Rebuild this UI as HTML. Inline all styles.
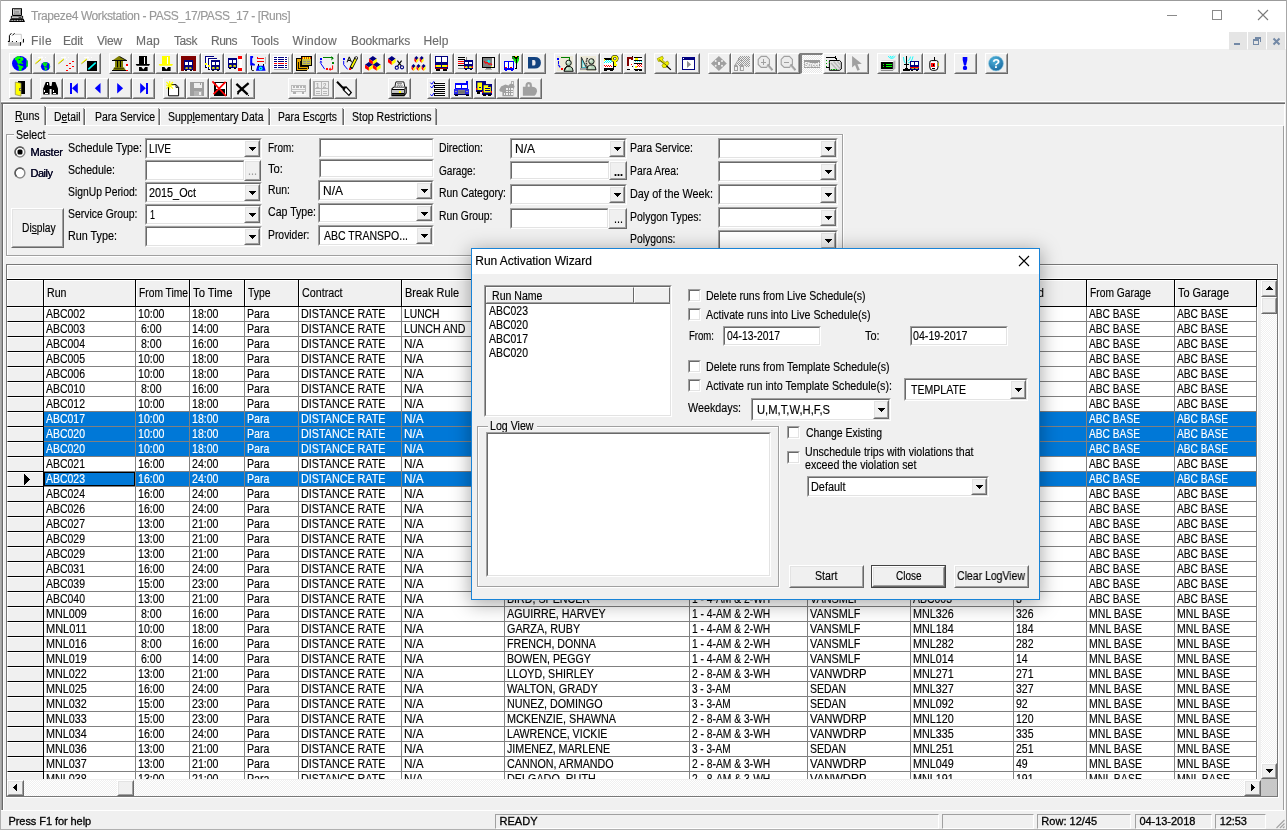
<!DOCTYPE html>
<html><head><meta charset="utf-8"><title>Trapeze4 Workstation - PASS_17/PASS_17 - [Runs]</title>
<style>
html,body{margin:0;padding:0}
body{width:1287px;height:830px;overflow:hidden;position:relative;background:#f0f0f0;font-family:"Liberation Sans",sans-serif;font-size:11px;line-height:14px;color:#000}
div,span,svg{position:absolute;box-sizing:border-box}
.t{white-space:pre;display:block;transform-origin:0 0;-webkit-text-stroke:0.15px}
.so{border:1px solid;border-color:#a0a0a0 #fff #fff #a0a0a0}
.si{left:0;top:0;right:0;bottom:0;border:1px solid;border-color:#696969 #e3e3e3 #e3e3e3 #696969;background:#fff}
.ro{border:1px solid;border-color:#fff #696969 #696969 #fff;background:#f0f0f0}
.ri{left:0;top:0;right:0;bottom:0;border:1px solid;border-color:#e3e3e3 #a0a0a0 #a0a0a0 #e3e3e3}
.tb{border:1px solid;border-color:#fff #696969 #696969 #fff;background:#f0f0f0}
.tb .ri{border-color:#f0f0f0 #a0a0a0 #a0a0a0 #f0f0f0}
.g{font-size:12px;line-height:15px;transform:scaleX(0.88)}
.tp{border:solid;border-width:2px 1px 1px 2px;border-color:#808080 #fff #fff #808080;background:repeating-conic-gradient(#fff 0% 25%,#e6e6e6 0% 50%) 0 0/2px 2px}
</style></head><body>
<div style="left:0;top:0;width:1287px;height:830px;will-change:transform">
<div style="left:0px;top:0px;width:1287px;height:49px;background:#fff"></div>
<div style="left:0px;top:0px;width:1287px;height:1px;background:#9b9b9b"></div>
<div style="left:0px;top:0px;width:1px;height:830px;background:#b0b0b0"></div>
<div style="left:1286px;top:0px;width:1px;height:830px;background:#a8a8a8"></div>
<div style="left:0px;top:829px;width:1287px;height:1px;background:#b0b0b0"></div>
<svg style="left:8px;top:7px" width="18" height="16" viewBox="8 7 18 16">
<rect x="12" y="7.9" width="10" height="8" rx="1" fill="#000"/><rect x="13" y="8.8" width="8" height="5.9" fill="#fff"/><rect x="14" y="9.5" width="6.6" height="4.5" fill="#c8c8c8" stroke="#444" stroke-width="0.5"/><rect x="15.2" y="10.9" width="3.8" height="1.9" fill="#9a9a9a"/>
<rect x="10.9" y="15.9" width="12.2" height="2.8" fill="#000"/><rect x="11.8" y="16.5" width="10.4" height="1.4" fill="#fff"/><rect x="12.3" y="16.6" width="5.3" height="1.1" fill="#b0b0b0"/><rect x="18.5" y="17.2" width="3" height="0.7" fill="#000"/>
<polygon points="10.4,18.7 23.6,18.7 25,22 9,22" fill="#000"/><path d="M10.6 20.4H23.4" stroke="#fff" stroke-width="0.9" stroke-dasharray="1 0.6"/>
</svg>
<span class="t" style="left:31px;top:9px;font-size:12px;line-height:15px;color:#999;letter-spacing:-0.41px;">Trapeze4 Workstation - PASS_17/PASS_17 - [Runs]</span>
<div style="left:1167px;top:15px;width:10px;height:1px;background:#8a8a8a"></div>
<div style="left:1212px;top:10px;width:10px;height:10px;border:1px solid #8a8a8a"></div>
<svg style="left:1257px;top:9px" width="12" height="12"><path d="M1 1L11 11M11 1L1 11" stroke="#7a7a7a" stroke-width="1.1" fill="none"/></svg>
<svg style="left:7px;top:32px" width="18" height="15" viewBox="7 32 18 15">
<path d="M14.5 34.3H21.3V39.5" stroke="#c4c4c4" stroke-width="0.9" fill="none"/>
<path d="M9.4 41.2V35.6L11.4 33.2M12.4 35.4L14.6 33.2" stroke="#000" stroke-width="1" fill="none"/>
<rect x="7.9" y="40.9" width="1.9" height="1.1" fill="#000"/><rect x="11.9" y="41" width="1" height="1" fill="#000"/><rect x="16" y="41" width="1" height="1" fill="#000"/>
<rect x="8.2" y="42.2" width="11.8" height="3.7" fill="#c2c2c2"/>
<polygon points="20.9,42 23,39 23,42.4 20.9,45.4" fill="#dcdcdc"/>
<rect x="20" y="42" width="0.95" height="3.7" fill="#000"/><rect x="23" y="38.9" width="0.95" height="3.6" fill="#000"/>
</svg>
<span class="t" style="left:31px;top:34px;font-size:12px;line-height:15px;color:#6d6d6d;letter-spacing:0.41px;">File</span>
<span class="t" style="left:63px;top:34px;font-size:12px;line-height:15px;color:#6d6d6d;letter-spacing:-0.17px;">Edit</span>
<span class="t" style="left:97px;top:34px;font-size:12px;line-height:15px;color:#6d6d6d;letter-spacing:-0.20px;">View</span>
<span class="t" style="left:136px;top:34px;font-size:12px;line-height:15px;color:#6d6d6d;letter-spacing:0.22px;">Map</span>
<span class="t" style="left:174px;top:34px;font-size:12px;line-height:15px;color:#6d6d6d;letter-spacing:-0.42px;">Task</span>
<span class="t" style="left:211px;top:34px;font-size:12px;line-height:15px;color:#6d6d6d;letter-spacing:-0.50px;">Runs</span>
<span class="t" style="left:251px;top:34px;font-size:12px;line-height:15px;color:#6d6d6d;letter-spacing:-0.00px;">Tools</span>
<span class="t" style="left:292.5px;top:34px;font-size:12px;line-height:15px;color:#6d6d6d;letter-spacing:0.30px;">Window</span>
<span class="t" style="left:351px;top:34px;font-size:12px;line-height:15px;color:#6d6d6d;letter-spacing:-0.11px;">Bookmarks</span>
<span class="t" style="left:423.5px;top:34px;font-size:12px;line-height:15px;color:#6d6d6d;letter-spacing:0.08px;">Help</span>
<div style="left:1229px;top:32px;width:18px;height:18px;background:#e5e5e5"></div>
<div style="left:1248px;top:32px;width:18px;height:18px;background:#e5e5e5"></div>
<div style="left:1267px;top:32px;width:18px;height:18px;background:#e5e5e5"></div>
<div style="left:1234px;top:43px;width:6px;height:2px;background:#7389a6"></div>
<div style="left:1253px;top:39px;width:6px;height:6px;border:1px solid #7389a6;border-top-width:2px"></div>
<div style="left:1255px;top:37px;width:6px;height:5px;border:1px solid #7389a6;border-top-width:2px;border-left:0;border-bottom:0"></div>
<div style="left:1255px;top:37px;width:1px;height:2px;background:#7389a6"></div>
<svg style="left:1272px;top:37px" width="9" height="9"><path d="M1.5 1.5L7.5 7.5M7.5 1.5L1.5 7.5" stroke="#7389a6" stroke-width="2" fill="none"/></svg>
<div class="tb" style="left:9px;top:53px;width:23px;height:21px"><div class="ri"></div></div>
<svg style="left:12px;top:56px;overflow:visible" width="16" height="15" viewBox="0 0 16 15" shape-rendering="crispEdges"><ellipse cx="8" cy="7.5" rx="8" ry="7.6" fill="#0000ff" shape-rendering="auto"/><polygon points="2.60,2.50 5.50,0.30 8.00,0.20 8.20,1.60 10.00,1.00 11.50,2.40 11.00,4.40 9.60,5.00 9.60,6.40 11.00,6.90 11.00,8.00 8.50,7.60 6.50,8.00 5.00,6.60 4.40,4.60 3.00,4.00" fill="#00ff00" shape-rendering="auto"/><polygon points="5.40,8.40 7.00,8.60 8.00,9.50 11.00,10.00 11.40,11.60 10.00,12.20 9.50,14.60 7.60,15.00 6.50,13.00 6.80,11.00 5.50,9.60" fill="#00ff00" shape-rendering="auto"/><polygon points="14.40,3.00 15.70,5.00 16.00,10.00 14.80,11.60 14.20,9.00 14.50,6.00" fill="#00ff00" shape-rendering="auto"/><polygon points="6.40,3.20 8.40,2.80 8.20,4.00 6.80,4.20" fill="#0000ff" shape-rendering="auto"/></svg>
<div class="tb" style="left:32px;top:53px;width:23px;height:21px"><div class="ri"></div></div>
<svg style="left:35px;top:56px;overflow:visible" width="16" height="15" viewBox="0 0 16 15" shape-rendering="crispEdges"><path d="M0.5 7.7L5.8 3.5" stroke="#8a8000" stroke-width="0.9" fill="none" shape-rendering="auto"/><path d="M0.4 7.1L5.7 2.9" stroke="#ffff00" stroke-width="1" fill="none" shape-rendering="auto"/><path d="M3 1.5H8M6.5 0.5L8 1.5L6.5 2.5" stroke="#fff" stroke-width="0.9" fill="none" shape-rendering="auto"/><rect x="10" y="1" width="1" height="1" fill="#fff"/><rect x="8" y="3" width="1" height="1" fill="#fff"/><ellipse cx="10.5" cy="10.3" rx="4.6" ry="4.369999999999999" fill="#0000ff" shape-rendering="auto"/><polygon points="7.39,7.43 9.06,6.16 10.50,6.10 10.62,6.91 11.65,6.56 12.51,7.37 12.22,8.52 11.42,8.86 11.42,9.67 12.22,9.96 12.22,10.59 10.79,10.36 9.64,10.59 8.78,9.78 8.43,8.63 7.62,8.29" fill="#00ff00" shape-rendering="auto"/><polygon points="9.01,10.82 9.93,10.93 10.50,11.45 12.22,11.74 12.46,12.66 11.65,13.00 11.36,14.38 10.27,14.61 9.64,13.46 9.81,12.31 9.06,11.51" fill="#00ff00" shape-rendering="auto"/><polygon points="14.18,7.71 14.93,8.86 15.10,11.74 14.41,12.66 14.06,11.16 14.24,9.44" fill="#00ff00" shape-rendering="auto"/><polygon points="9.58,7.83 10.73,7.60 10.62,8.29 9.81,8.40" fill="#0000ff" shape-rendering="auto"/></svg>
<div class="tb" style="left:55px;top:53px;width:23px;height:21px"><div class="ri"></div></div>
<svg style="left:58px;top:56px;overflow:visible" width="16" height="15" viewBox="0 0 16 15" shape-rendering="crispEdges"><path d="M0.5 7.7L5.8 3.5" stroke="#8a8000" stroke-width="0.9" fill="none" shape-rendering="auto"/><path d="M0.4 7.1L5.7 2.9" stroke="#ffff00" stroke-width="1" fill="none" shape-rendering="auto"/><path d="M3 1.5H8M6.5 0.5L8 1.5L6.5 2.5" stroke="#fff" stroke-width="0.9" fill="none" shape-rendering="auto"/><rect x="10" y="1" width="1" height="1" fill="#fff"/><rect x="8" y="3" width="1" height="1" fill="#fff"/><rect x="13.7" y="4.7" width="2.6" height="1.6" fill="#ffe8e8"/><rect x="14" y="5" width="2" height="1" fill="#ff0000"/><rect x="10.7" y="6.7" width="2.6" height="1.6" fill="#ffe8e8"/><rect x="11" y="7" width="2" height="1" fill="#ff0000"/><rect x="7.7" y="8.7" width="2.6" height="1.6" fill="#ffe8e8"/><rect x="8" y="9" width="2" height="1" fill="#ff0000"/><rect x="13.7" y="9.7" width="2.6" height="1.6" fill="#ffe8e8"/><rect x="14" y="10" width="2" height="1" fill="#ff0000"/><rect x="10.7" y="11.7" width="2.6" height="1.6" fill="#ffe8e8"/><rect x="11" y="12" width="2" height="1" fill="#ff0000"/><rect x="7.7" y="13.7" width="2.6" height="1.6" fill="#ffe8e8"/><rect x="8" y="14" width="2" height="1" fill="#ff0000"/></svg>
<div class="tb" style="left:78px;top:53px;width:23px;height:21px"><div class="ri"></div></div>
<svg style="left:81px;top:56px;overflow:visible" width="16" height="15" viewBox="0 0 16 15" shape-rendering="crispEdges"><path d="M0.5 7.7L5.8 3.5" stroke="#8a8000" stroke-width="0.9" fill="none" shape-rendering="auto"/><path d="M0.4 7.1L5.7 2.9" stroke="#ffff00" stroke-width="1" fill="none" shape-rendering="auto"/><path d="M3 1.5H8M6.5 0.5L8 1.5L6.5 2.5" stroke="#fff" stroke-width="0.9" fill="none" shape-rendering="auto"/><rect x="10" y="1" width="1" height="1" fill="#fff"/><rect x="8" y="3" width="1" height="1" fill="#fff"/><rect x="6" y="5" width="10" height="10" fill="#000"/><path d="M7.3 13.4L14.7 6.6" stroke="#00ffff" stroke-width="1.5" fill="none" shape-rendering="auto"/></svg>
<div class="tb" style="left:109px;top:53px;width:23px;height:21px"><div class="ri"></div></div>
<svg style="left:112px;top:56px;overflow:visible" width="16" height="15" viewBox="0 0 16 15" shape-rendering="crispEdges"><polygon points="6.9,0 14.8,4.8 0,4.8" fill="#808000" shape-rendering="auto"/><path d="M7.5 0.5L14.8 4.6" stroke="#000" stroke-width="0.9" fill="none" shape-rendering="auto"/><rect x="0" y="4" width="15" height="1" fill="#000"/><rect x="3" y="5" width="8" height="6.5" fill="#000"/><rect x="3" y="5" width="1.6" height="6.5" fill="#808000"/><rect x="6" y="5" width="1.6" height="6.5" fill="#808000"/><rect x="9" y="5" width="1.6" height="6.5" fill="#808000"/><polygon points="2,11.2 12,11.2 13.5,14 1,14" fill="#808000" shape-rendering="auto"/><rect x="0" y="14" width="14.5" height="1" fill="#000"/><path d="M2 13.2l1 -1l1 1l1 -1l1 1l1 -1l1 1l1 -1l1 1l1 -1l1 1" stroke="#000" stroke-width="0.6" fill="none" shape-rendering="auto"/><rect x="14" y="8.4" width="2" height="1.6" fill="#ff0000"/><rect x="14" y="10" width="2" height="4" fill="#fff"/><rect x="14" y="14" width="2" height="1" fill="#ff0000"/></svg>
<div class="tb" style="left:132px;top:53px;width:23px;height:21px"><div class="ri"></div></div>
<svg style="left:135px;top:56px;overflow:visible" width="16" height="15" viewBox="0 0 16 15" shape-rendering="crispEdges"><rect x="4" y="0" width="8" height="8" fill="#000"/><rect x="9" y="1" width="1" height="7" fill="#fff"/><polygon points="0.7,8 15,8 14,9.8 1.7,9.8" fill="#000" shape-rendering="auto"/><rect x="4" y="10" width="9" height="1" fill="#f8f8f8"/><polygon points="4,11 6.4,11 8.3,13.4 10.2,11 12.6,11 12.6,15 4,15" fill="#000" shape-rendering="auto"/></svg>
<div class="tb" style="left:155px;top:53px;width:23px;height:21px"><div class="ri"></div></div>
<svg style="left:158px;top:56px;overflow:visible" width="16" height="15" viewBox="0 0 16 15" shape-rendering="crispEdges"><rect x="4" y="0" width="8" height="8" fill="#ffff00"/><rect x="9" y="1" width="1" height="7" fill="#fff"/><polygon points="0.7,8 15,8 14,9.8 1.7,9.8" fill="#ffff00" shape-rendering="auto"/><rect x="4" y="10" width="9" height="1" fill="#f8f8f8"/><polygon points="4,11 6.4,11 8.3,13.4 10.2,11 12.6,11 12.6,15 4,15" fill="#000" shape-rendering="auto"/></svg>
<div class="tb" style="left:178px;top:53px;width:23px;height:21px"><div class="ri"></div></div>
<svg style="left:181px;top:56px;overflow:visible" width="16" height="15" viewBox="0 0 16 15" shape-rendering="crispEdges"><rect x="0" y="0" width="15" height="15" fill="#800000"/><rect x="2.6" y="3.7" width="9.8" height="11.3" fill="#fff"/><rect x="3.4" y="4.4" width="8.2" height="9.6" fill="#000080"/><rect x="4.4" y="6.128" width="2.5999999999999996" height="2.88" fill="#fff"/><rect x="8.0" y="6.128" width="2.5999999999999996" height="2.88" fill="#fff"/><polygon points="4.4,11.628 6.35,10.928 7.0,12.828000000000001 4.4,12.828000000000001" fill="#ffff00" shape-rendering="auto"/><polygon points="10.6,11.628 8.65,10.928 8.0,12.828000000000001 10.6,12.828000000000001" fill="#ffff00" shape-rendering="auto"/><rect x="4.2" y="14.0" width="2" height="1" fill="#000"/><rect x="8.8" y="14.0" width="2" height="1" fill="#000"/></svg>
<div class="tb" style="left:201px;top:53px;width:23px;height:21px"><div class="ri"></div></div>
<svg style="left:204px;top:56px;overflow:visible" width="16" height="15" viewBox="0 0 16 15" shape-rendering="crispEdges"><rect x="1" y="0" width="9" height="11" fill="#000080"/><rect x="2" y="1" width="8" height="10" fill="#fff"/><rect x="1" y="6.5" width="1.6" height="2" fill="#ffff00"/><rect x="1" y="11" width="1.6" height="1.2" fill="#000"/><rect x="4" y="2" width="9" height="12.4" fill="#000080"/><rect x="5" y="3" width="8" height="10.6" fill="#fff"/><rect x="4" y="8.5" width="1.6" height="2" fill="#ffff00"/><rect x="4.4" y="13.4" width="1.6" height="1" fill="#000"/><rect x="7" y="4" width="8.9" height="10" fill="#000080"/><rect x="8" y="5.8" width="2.95" height="3.0" fill="#fff"/><rect x="11.95" y="5.8" width="2.95" height="3.0" fill="#fff"/><polygon points="8,11.5 10.2125,10.8 10.95,12.700000000000001 8,12.700000000000001" fill="#ffff00" shape-rendering="auto"/><polygon points="14.9,11.5 12.6875,10.8 11.95,12.700000000000001 14.9,12.700000000000001" fill="#ffff00" shape-rendering="auto"/><rect x="7.8" y="14" width="2" height="1" fill="#000"/><rect x="13.100000000000001" y="14" width="2" height="1" fill="#000"/></svg>
<div class="tb" style="left:224px;top:53px;width:23px;height:21px"><div class="ri"></div></div>
<svg style="left:227px;top:56px;overflow:visible" width="16" height="15" viewBox="0 0 16 15" shape-rendering="crispEdges"><rect x="1" y="2" width="9" height="10" fill="#000080"/><rect x="2" y="3.8" width="3.0" height="3.0" fill="#fff"/><rect x="6.0" y="3.8" width="3.0" height="3.0" fill="#fff"/><polygon points="2,9.5 4.25,8.8 5.0,10.700000000000001 2,10.700000000000001" fill="#ffff00" shape-rendering="auto"/><polygon points="9,9.5 6.75,8.8 6.0,10.700000000000001 9,10.700000000000001" fill="#ffff00" shape-rendering="auto"/><rect x="1.8" y="12" width="2" height="1" fill="#000"/><rect x="7.2" y="12" width="2" height="1" fill="#000"/><rect x="11" y="0" width="4" height="2.9" fill="#ff0000"/><rect x="11" y="12" width="4" height="2.9" fill="#ff0000"/><rect x="12.1" y="2.9" width="2.9" height="9.1" fill="#fff"/></svg>
<div class="tb" style="left:247px;top:53px;width:23px;height:21px"><div class="ri"></div></div>
<svg style="left:250px;top:56px;overflow:visible" width="16" height="15" viewBox="0 0 16 15" shape-rendering="crispEdges"><polygon points="0.2,0 3.1,0 3.1,1.6 2.2,2.4 2.2,6.8 4.9,8 4.9,9.4 0.2,9.4" fill="#0000ff" shape-rendering="auto"/><path d="M1.5 9.4V13.8Q1.6 14.6 3.8 14.6" stroke="#000" stroke-width="1" fill="none" shape-rendering="auto"/><rect x="7" y="1.9" width="6.8" height="1.1" fill="#ff0000"/><rect x="7" y="4.8" width="6.8" height="1.1" fill="#ff0000"/><rect x="7" y="0.8" width="1.1" height="1.1" fill="#ff0000"/><rect x="14.8" y="1" width="0.8" height="7" fill="#b8b8b8"/><rect x="8" y="8" width="0.9" height="2" fill="#000"/><rect x="13" y="8" width="0.9" height="2" fill="#000"/><polygon points="7.4,9.8 14.2,9.8 15.6,14.8 5.9,14.8" fill="#0000ff" shape-rendering="auto"/><circle cx="10.7" cy="12.5" r="1.9" fill="#00ffff" shape-rendering="auto"/><circle cx="10.7" cy="12.5" r="0.8" fill="#006080" shape-rendering="auto"/></svg>
<div class="tb" style="left:270px;top:53px;width:23px;height:21px"><div class="ri"></div></div>
<svg style="left:273px;top:56px;overflow:visible" width="16" height="15" viewBox="0 0 16 15" shape-rendering="crispEdges"><rect x="1" y="1" width="15.2" height="13.4" fill="#b0b0b0"/><rect x="0" y="0" width="15.2" height="13.4" fill="#fff"/><rect x="1" y="1" width="2.6" height="1" fill="#000080"/><rect x="5" y="1" width="5.8" height="1" fill="#000080"/><rect x="12.2" y="1" width="1.8" height="1" fill="#000080"/><rect x="1" y="3" width="2.6" height="1" fill="#000080"/><rect x="5" y="3" width="5.8" height="1" fill="#000080"/><rect x="12.2" y="3" width="1.8" height="1" fill="#000080"/><rect x="1" y="5" width="2.6" height="1" fill="#000080"/><rect x="5" y="5" width="5.8" height="1" fill="#000080"/><rect x="12.2" y="5" width="1.8" height="1" fill="#000080"/><rect x="1" y="7" width="2.6" height="1" fill="#ff0000"/><rect x="5" y="7" width="5.8" height="1" fill="#ff0000"/><rect x="12.2" y="7" width="1.8" height="1" fill="#ff0000"/><rect x="1" y="9" width="2.6" height="1" fill="#000080"/><rect x="5" y="9" width="5.8" height="1" fill="#000080"/><rect x="12.2" y="9" width="1.8" height="1" fill="#000080"/><rect x="1" y="11" width="2.6" height="1" fill="#000080"/><rect x="5" y="11" width="5.8" height="1" fill="#000080"/><rect x="12.2" y="11" width="1.8" height="1" fill="#000080"/></svg>
<div class="tb" style="left:293px;top:53px;width:23px;height:21px"><div class="ri"></div></div>
<svg style="left:296px;top:56px;overflow:visible" width="16" height="15" viewBox="0 0 16 15" shape-rendering="crispEdges"><rect x="0" y="2.3" width="13.4" height="12.7" fill="#000"/><rect x="1" y="3.3" width="11.4" height="10.7" fill="#e8a800"/><path d="M2.5 6V12.5H11M4.5 4.5V10.5H13" stroke="#000" stroke-width="0.9" fill="none" /><rect x="5" y="0" width="10.8" height="10" fill="#000"/><rect x="6" y="1" width="8.8" height="8" fill="#c8c040"/><rect x="6" y="1" width="8.8" height="2" fill="#e04000"/><rect x="7" y="1.2" width="0.9" height="2" fill="#ffff00"/><rect x="8.6" y="1.2" width="0.9" height="2" fill="#ffff00"/><rect x="11" y="1.2" width="0.9" height="2" fill="#ffff00"/><rect x="12.6" y="1.2" width="0.9" height="2" fill="#ffff00"/><rect x="7" y="5" width="3" height="1" fill="#909090"/><rect x="11" y="5" width="3" height="1" fill="#909090"/><rect x="7" y="7" width="3" height="1" fill="#909090"/><rect x="11" y="7" width="3" height="1" fill="#909090"/><polygon points="11,15 13.4,12.6 13.4,15" fill="#f0f0f0" /></svg>
<div class="tb" style="left:316px;top:53px;width:23px;height:21px"><div class="ri"></div></div>
<svg style="left:319px;top:56px;overflow:visible" width="16" height="15" viewBox="0 0 16 15" shape-rendering="crispEdges"><rect x="1" y="2" width="2" height="1.8" fill="#0000ff"/><rect x="4.3" y="0.9" width="9.3" height="0.9" fill="#008000"/><polygon points="12,0 14.8,2.2 12.2,4.4 12.6,2.2" fill="#008000" shape-rendering="auto"/><rect x="13.2" y="6.2" width="1.8" height="1.8" fill="#008000"/><polygon points="1.9,4.6 3.4,6.6 0.4,6.6" fill="#0000ff" shape-rendering="auto"/><path d="M1.9 6.6V7.6L5.7 13.2" stroke="#0000ff" stroke-width="1" fill="none" shape-rendering="auto"/><rect x="7" y="12.1" width="1.8" height="1.8" fill="#ff0000"/><path d="M13.6 9.4V13.3H10.5" stroke="#ff0000" stroke-width="1" fill="none" shape-rendering="auto"/><polygon points="11.6,11.6 9.6,13.3 11.6,15" fill="#ff0000" shape-rendering="auto"/></svg>
<div class="tb" style="left:339px;top:53px;width:23px;height:21px"><div class="ri"></div></div>
<svg style="left:342px;top:56px;overflow:visible" width="16" height="15" viewBox="0 0 16 15" shape-rendering="crispEdges"><rect x="1" y="2" width="2" height="1.8" fill="#0000ff"/><path d="M1.7 4.8V8.7L5.6 13.4" stroke="#0000ff" stroke-width="1" fill="none" shape-rendering="auto"/><text x="4.8" y="5.6" font-size="7.5" font-family="Liberation Sans,sans-serif" fill="#000" stroke="#000" stroke-width="0.3">A</text><path d="M14.4 1.6L9 12.2" stroke="#000" stroke-width="3.4" fill="none" shape-rendering="auto"/><path d="M14 2.6L9.6 11.2" stroke="#ffff00" stroke-width="1.7" fill="none" shape-rendering="auto"/><circle cx="14.3" cy="1.9" r="1.3" fill="#fff" stroke="#000" stroke-width="0.8" shape-rendering="auto"/><polygon points="7.9,11.3 10.3,12.6 8.2,14" fill="#000" shape-rendering="auto"/><rect x="7" y="12.4" width="1.8" height="1.4" fill="#ff0000"/></svg>
<div class="tb" style="left:362px;top:53px;width:23px;height:21px"><div class="ri"></div></div>
<svg style="left:365px;top:56px;overflow:visible" width="16" height="15" viewBox="0 0 16 15" shape-rendering="crispEdges"><polygon points="7.9,0 11.8,2.64 7.9,5.28 4,2.64" fill="#000080" shape-rendering="auto"/><polygon points="4,2.64 7.9,5.28 7.9,8.8 4,6.16" fill="#ff0000" shape-rendering="auto"/><polygon points="11.8,2.64 7.9,5.28 7.9,8.8 11.8,6.16" fill="#ffff00" shape-rendering="auto"/><polygon points="3.9,6 7.8,8.64 3.9,11.280000000000001 0,8.64" fill="#000080" shape-rendering="auto"/><polygon points="0,8.64 3.9,11.280000000000001 3.9,14.8 0,12.16" fill="#ff0000" shape-rendering="auto"/><polygon points="7.8,8.64 3.9,11.280000000000001 3.9,14.8 7.8,12.16" fill="#ffff00" shape-rendering="auto"/><polygon points="11.8,6 15.7,8.64 11.8,11.280000000000001 7.9,8.64" fill="#000080" shape-rendering="auto"/><polygon points="7.9,8.64 11.8,11.280000000000001 11.8,14.8 7.9,12.16" fill="#ff0000" shape-rendering="auto"/><polygon points="15.7,8.64 11.8,11.280000000000001 11.8,14.8 15.7,12.16" fill="#ffff00" shape-rendering="auto"/></svg>
<div class="tb" style="left:385px;top:53px;width:23px;height:21px"><div class="ri"></div></div>
<svg style="left:388px;top:56px;overflow:visible" width="16" height="15" viewBox="0 0 16 15" shape-rendering="crispEdges"><polygon points="3.8,0 7.6,2.6999999999999997 3.8,5.3999999999999995 0,2.6999999999999997" fill="#000080" shape-rendering="auto"/><polygon points="0,2.6999999999999997 3.8,5.3999999999999995 3.8,9 0,6.300000000000001" fill="#ff0000" shape-rendering="auto"/><polygon points="7.6,2.6999999999999997 3.8,5.3999999999999995 3.8,9 7.6,6.300000000000001" fill="#ffff00" shape-rendering="auto"/><path d="M9.4 4.6L13.4 10M13.6 4.6L9.6 10" stroke="#000" stroke-width="1.2" fill="none" shape-rendering="auto"/><circle cx="8.8" cy="11.7" r="1.6" fill="none" stroke="#000080" stroke-width="1.1" shape-rendering="auto"/><circle cx="14" cy="11.3" r="1.6" fill="none" stroke="#000080" stroke-width="1.1" shape-rendering="auto"/></svg>
<div class="tb" style="left:408px;top:53px;width:23px;height:21px"><div class="ri"></div></div>
<svg style="left:411px;top:56px;overflow:visible" width="16" height="15" viewBox="0 0 16 15" shape-rendering="crispEdges"><polygon points="5.4,0 7.4,2.1 5.4,4.2 3.4,2.1" fill="#000080" shape-rendering="auto"/><polygon points="3.4,2.1 5.4,4.2 5.4,7 3.4,4.9" fill="#ff0000" shape-rendering="auto"/><polygon points="7.4,2.1 5.4,4.2 5.4,7 7.4,4.9" fill="#ffff00" shape-rendering="auto"/><polygon points="10.7,0 12.7,2.1 10.7,4.2 8.7,2.1" fill="#000080" shape-rendering="auto"/><polygon points="8.7,2.1 10.7,4.2 10.7,7 8.7,4.9" fill="#ff0000" shape-rendering="auto"/><polygon points="12.7,2.1 10.7,4.2 10.7,7 12.7,4.9" fill="#ffff00" shape-rendering="auto"/><polygon points="2.5,8 4.5,10.1 2.5,12.2 0.5,10.1" fill="#000080" shape-rendering="auto"/><polygon points="0.5,10.1 2.5,12.2 2.5,15 0.5,12.9" fill="#ff0000" shape-rendering="auto"/><polygon points="4.5,10.1 2.5,12.2 2.5,15 4.5,12.9" fill="#ffff00" shape-rendering="auto"/><polygon points="7.5,8 9.5,10.1 7.5,12.2 5.5,10.1" fill="#000080" shape-rendering="auto"/><polygon points="5.5,10.1 7.5,12.2 7.5,15 5.5,12.9" fill="#ff0000" shape-rendering="auto"/><polygon points="9.5,10.1 7.5,12.2 7.5,15 9.5,12.9" fill="#ffff00" shape-rendering="auto"/><polygon points="12.6,8 14.6,10.1 12.6,12.2 10.6,10.1" fill="#000080" shape-rendering="auto"/><polygon points="10.6,10.1 12.6,12.2 12.6,15 10.6,12.9" fill="#ff0000" shape-rendering="auto"/><polygon points="14.6,10.1 12.6,12.2 12.6,15 14.6,12.9" fill="#ffff00" shape-rendering="auto"/></svg>
<div class="tb" style="left:431px;top:53px;width:23px;height:21px"><div class="ri"></div></div>
<svg style="left:434px;top:56px;overflow:visible" width="16" height="15" viewBox="0 0 16 15" shape-rendering="crispEdges"><rect x="0.9" y="0" width="12.9" height="13" fill="#000080"/><rect x="2" y="1" width="5" height="4.9" fill="#fff"/><rect x="8.3" y="1" width="4.8" height="4.9" fill="#fff"/><rect x="9.6" y="4.6" width="2" height="0.8" fill="#b0b0b0"/><rect x="0.9" y="9" width="12.9" height="1.9" fill="#ffff00"/><rect x="0.9" y="9" width="1" height="1.9" fill="#ff0000"/><rect x="12.8" y="9" width="1" height="1.9" fill="#ff0000"/><rect x="6.9" y="9" width="1.4" height="1.9" fill="#000080"/><rect x="1.4" y="12" width="11.9" height="0.7" fill="#a00000"/><rect x="2" y="13" width="3.6" height="1.9" fill="#000"/><rect x="9.1" y="13" width="3.6" height="1.9" fill="#000"/></svg>
<div class="tb" style="left:454px;top:53px;width:23px;height:21px"><div class="ri"></div></div>
<svg style="left:457px;top:56px;overflow:visible" width="16" height="15" viewBox="0 0 16 15" shape-rendering="crispEdges"><rect x="1" y="0.9" width="6.9" height="0.9" fill="#000"/><rect x="1" y="3" width="6.9" height="0.9" fill="#000"/><rect x="1" y="5.1" width="5.9" height="0.9" fill="#ff0000"/><rect x="1" y="7.3" width="5.9" height="0.9" fill="#ff0000"/><rect x="1" y="9.3" width="5.9" height="0.9" fill="#000"/><rect x="1" y="12.3" width="5.9" height="0.7" fill="#909090"/><rect x="9.2" y="0.9" width="0.6" height="3.2" fill="#808080"/><rect x="6.9" y="4" width="8.9" height="9" fill="#000080"/><rect x="7.9" y="5.62" width="2.95" height="2.6999999999999997" fill="#fff"/><rect x="11.850000000000001" y="5.62" width="2.95" height="2.6999999999999997" fill="#fff"/><polygon points="7.9,10.82 10.1125,10.120000000000001 10.850000000000001,12.020000000000001 7.9,12.020000000000001" fill="#ffff00" shape-rendering="auto"/><polygon points="14.8,10.82 12.5875,10.120000000000001 11.850000000000001,12.020000000000001 14.8,12.020000000000001" fill="#ffff00" shape-rendering="auto"/><rect x="7.7" y="13" width="2" height="1" fill="#000"/><rect x="13.0" y="13" width="2" height="1" fill="#000"/><rect x="6.9" y="10.2" width="0.8" height="1.6" fill="#ff0000"/><rect x="15" y="10.2" width="0.8" height="1.6" fill="#ff0000"/></svg>
<div class="tb" style="left:477px;top:53px;width:23px;height:21px"><div class="ri"></div></div>
<svg style="left:480px;top:56px;overflow:visible" width="16" height="15" viewBox="0 0 16 15" shape-rendering="crispEdges"><rect x="2" y="1" width="13" height="10.6" fill="#000"/><rect x="3" y="2" width="10.4" height="8.6" fill="#808080"/><rect x="12.4" y="2" width="1.6" height="8.6" fill="#f0f0f0"/><polygon points="8.6,3.7 10.4,5.5 8.6,7.3 6.8,5.5" fill="#00ffff" shape-rendering="auto"/><path d="M4 5.2L5.6 7L7.4 6.4L9 8.4L11 7.8L12 9" stroke="#ff0000" stroke-width="1.1" fill="none" shape-rendering="auto"/><rect x="10.9" y="10.1" width="1" height="0.9" fill="#ffff00"/><rect x="6.2" y="11.9" width="4.7" height="1.5" fill="#909090"/><rect x="5" y="13.2" width="7" height="0.6" fill="#b0b0b0"/></svg>
<div class="tb" style="left:500px;top:53px;width:23px;height:21px"><div class="ri"></div></div>
<svg style="left:503px;top:56px;overflow:visible" width="16" height="15" viewBox="0 0 16 15" shape-rendering="crispEdges"><rect x="1.1" y="4.8" width="9.6" height="9.3" fill="#0000ff"/><rect x="2.1" y="5.9" width="3.3" height="4" fill="#fff"/><rect x="6.3" y="5.9" width="3.5" height="4" fill="#fff"/><rect x="2.1" y="10.2" width="3.3" height="1.6" fill="#fff"/><rect x="6.3" y="10.2" width="3.5" height="1.6" fill="#fff"/><rect x="2.4" y="11" width="1.6" height="0.9" fill="#ff0000"/><rect x="7.4" y="11" width="1.6" height="0.9" fill="#ff0000"/><rect x="2.4" y="10.6" width="1.6" height="0.5" fill="#ffff00"/><rect x="7.4" y="10.6" width="1.6" height="0.5" fill="#ffff00"/><rect x="2" y="14.1" width="2.2" height="0.9" fill="#0000ff"/><rect x="7.6" y="14.1" width="2.2" height="0.9" fill="#0000ff"/><polygon points="9.2,0 16,0 16,3 14.4,5 12.8,5 9.2,2.4" fill="#000" shape-rendering="auto"/><path d="M13.6 5.2L9.6 0.8M13.6 5.2L15.8 0.8M13.6 7.4L10.6 3.6M13.6 7.4L15.8 3.4" stroke="#00ff00" stroke-width="1.1" fill="none" shape-rendering="auto"/><rect x="13.2" y="4" width="0.8" height="8.6" fill="#000"/><rect x="12" y="12" width="2" height="0.7" fill="#000"/><rect x="12.4" y="0" width="1.4" height="1" fill="#ffff00"/></svg>
<div class="tb" style="left:523px;top:53px;width:23px;height:21px"><div class="ri"></div></div>
<svg style="left:526px;top:56px;overflow:visible" width="16" height="15" viewBox="0 0 16 15" shape-rendering="crispEdges"><path d="M2 1H8.6Q14.9 1 14.9 6.8Q14.9 12.6 8.6 12.6H2Z" fill="#12427f" shape-rendering="auto"/><path d="M6.2 4H8.2Q9.6 4 9.6 6.8Q9.6 9.6 8.2 9.6H6.2Z" fill="#e8e8ee" shape-rendering="auto"/></svg>
<div class="tb" style="left:554px;top:53px;width:23px;height:21px"><div class="ri"></div></div>
<svg style="left:557px;top:56px;overflow:visible" width="16" height="15" viewBox="0 0 16 15" shape-rendering="crispEdges"><rect x="0" y="0" width="16" height="15" fill="#ece9d8"/><rect x="0.3" y="2.1" width="1.7" height="1.7" fill="#0000ff"/><rect x="0.5" y="5.1" width="1.1" height="2.9" fill="#0000ff"/><path d="M1.2 8.6L3.2 11.4" stroke="#0000ff" stroke-width="1.1" fill="none" shape-rendering="auto"/><rect x="4" y="12" width="1.9" height="1.8" fill="#ff0000"/><rect x="4" y="1" width="9" height="0.9" fill="#008000"/><rect x="12" y="1" width="1" height="3.4" fill="#008000"/><path d="M7.0 15.3q0.3 -4.2 3 -4.8h3.2q2.7 0.6 3 4.8z" fill="#b4d2b8" stroke="#000" stroke-width="0.9" shape-rendering="auto"/><circle cx="11.6" cy="6.9" r="2.7" fill="#b4d2b8" stroke="#000" stroke-width="0.9" shape-rendering="auto"/><circle cx="10.9" cy="6.2" r="1.1" fill="#e4f2e4" shape-rendering="auto"/><circle cx="10.4" cy="12.9" r="1.2" fill="#d4e8d4" shape-rendering="auto"/><path d="M9.8 10L7.4 14.6" stroke="#000" stroke-width="0.9" fill="none" shape-rendering="auto"/></svg>
<div class="tb" style="left:577px;top:53px;width:23px;height:21px"><div class="ri"></div></div>
<svg style="left:580px;top:56px;overflow:visible" width="16" height="15" viewBox="0 0 16 15" shape-rendering="crispEdges"><rect x="0" y="0" width="16" height="15" fill="#ece9d8"/><polygon points="1.4,1.2 1.4,12.3 6.8,12.3" fill="#48d0e0" shape-rendering="auto"/><path d="M1.4 1.2V12.3H6.8Z" stroke="#303030" stroke-width="0.9" fill="none" shape-rendering="auto"/><polygon points="2.6,6 2.6,11 5,11" fill="#ece9d8" shape-rendering="auto"/><rect x="0.4" y="12.3" width="6.4" height="1.8" fill="#a0a0a0"/><path d="M7.4 2Q5.4 6 7.4 11.6" stroke="#202020" stroke-width="1.6" fill="none" shape-rendering="auto" stroke-dasharray="1 0.7"/><path d="M6.800000000000001 13.8q0.3 -4.2 3 -4.8h3.2q2.7 0.6 3 4.8z" fill="#b4d2b8" stroke="#000" stroke-width="0.9" shape-rendering="auto"/><circle cx="11.4" cy="5.4" r="2.7" fill="#b4d2b8" stroke="#000" stroke-width="0.9" shape-rendering="auto"/><circle cx="10.700000000000001" cy="4.7" r="1.1" fill="#e4f2e4" shape-rendering="auto"/><circle cx="10.200000000000001" cy="11.4" r="1.2" fill="#d4e8d4" shape-rendering="auto"/></svg>
<div class="tb" style="left:600px;top:53px;width:23px;height:21px"><div class="ri"></div></div>
<svg style="left:603px;top:56px;overflow:visible" width="16" height="15" viewBox="0 0 16 15" shape-rendering="crispEdges"><rect x="0.6" y="1.9" width="10" height="12.1" fill="#000"/><rect x="1.4" y="7" width="8.4" height="2.4" fill="#fff"/><rect x="1.4" y="4" width="8.4" height="3" fill="#fff"/><rect x="1.4" y="4" width="1" height="1" fill="#00ffff"/><rect x="3.4" y="4" width="1" height="1" fill="#00ffff"/><rect x="5.4" y="4" width="1" height="1" fill="#00ffff"/><rect x="7.4" y="4" width="1" height="1" fill="#00ffff"/><rect x="2.4" y="5" width="1" height="1" fill="#00ffff"/><rect x="4.4" y="5" width="1" height="1" fill="#00ffff"/><rect x="6.4" y="5" width="1" height="1" fill="#00ffff"/><rect x="8.4" y="5" width="1" height="1" fill="#00ffff"/><rect x="1.4" y="6" width="1" height="1" fill="#00ffff"/><rect x="3.4" y="6" width="1" height="1" fill="#00ffff"/><rect x="5.4" y="6" width="1" height="1" fill="#00ffff"/><rect x="7.4" y="6" width="1" height="1" fill="#00ffff"/><rect x="1.4" y="9.4" width="8.4" height="2.2" fill="#fff"/><rect x="1.4" y="9.4" width="1" height="1" fill="#ff0000"/><rect x="3.4" y="9.4" width="1" height="1" fill="#ff0000"/><rect x="5.4" y="9.4" width="1" height="1" fill="#ff0000"/><rect x="7.4" y="9.4" width="1" height="1" fill="#ff0000"/><rect x="2.4" y="10.4" width="1" height="1" fill="#ff0000"/><rect x="4.4" y="10.4" width="1" height="1" fill="#ff0000"/><rect x="6.4" y="10.4" width="1" height="1" fill="#ff0000"/><rect x="8.4" y="10.4" width="1" height="1" fill="#ff0000"/><rect x="1.2" y="3" width="0.9" height="2.2" fill="#ffff00"/><rect x="1.3" y="13" width="2.2" height="1.9" fill="#000"/><rect x="7.4" y="13" width="2.5" height="1.9" fill="#000"/><circle cx="11.8" cy="2.6" r="2.4" fill="none" stroke="#000" stroke-width="2.6" shape-rendering="auto"/><circle cx="11.8" cy="2.6" r="2.4" fill="none" stroke="#ffff00" stroke-width="1.6" shape-rendering="auto"/><rect x="10.6" y="5" width="2.4" height="5.6" fill="#000"/><rect x="11.1" y="5" width="1.4" height="5.2" fill="#ffff00"/><rect x="12.4" y="8.4" width="1.6" height="1.6" fill="#ffff00"/></svg>
<div class="tb" style="left:623px;top:53px;width:23px;height:21px"><div class="ri"></div></div>
<svg style="left:626px;top:56px;overflow:visible" width="16" height="15" viewBox="0 0 16 15" shape-rendering="crispEdges"><rect x="0.8" y="1.2" width="5.7" height="2.2" fill="#800000"/><rect x="0.8" y="1.9" width="1.9" height="8.2" fill="#800000"/><rect x="4.6" y="1.2" width="1.9" height="4.6" fill="#800000"/><rect x="3" y="4.4" width="4.4" height="9.6" fill="#fff"/><rect x="5" y="8.2" width="1" height="1" fill="#ff0000"/><rect x="5.8" y="0.4" width="0.8" height="0.8" fill="#000"/><rect x="6.2" y="10.4" width="0.8" height="0.8" fill="#000"/><rect x="1.1" y="12.9" width="3.3" height="0.8" fill="#000"/><rect x="7.6" y="1.2" width="8.4" height="12.8" fill="#000"/><rect x="8.4" y="2" width="7.6" height="11" fill="#fff"/><rect x="8.6" y="2.3" width="3.3" height="1.5" fill="#ffff00"/><rect x="9" y="5.1" width="7" height="1.8" fill="#fff"/><rect x="9" y="5.1" width="1" height="1" fill="#00ffff"/><rect x="11" y="5.1" width="1" height="1" fill="#00ffff"/><rect x="13" y="5.1" width="1" height="1" fill="#00ffff"/><rect x="15" y="5.1" width="1" height="1" fill="#00ffff"/><rect x="11" y="8" width="5" height="3.6" fill="#fff"/><rect x="11" y="8" width="1" height="1" fill="#ff0000"/><rect x="13" y="8" width="1" height="1" fill="#ff0000"/><rect x="15" y="8" width="1" height="1" fill="#ff0000"/><rect x="12" y="9" width="1" height="1" fill="#ff0000"/><rect x="14" y="9" width="1" height="1" fill="#ff0000"/><rect x="11" y="10" width="1" height="1" fill="#ff0000"/><rect x="13" y="10" width="1" height="1" fill="#ff0000"/><rect x="15" y="10" width="1" height="1" fill="#ff0000"/><rect x="9" y="9.8" width="1.8" height="1.8" fill="#ffff00"/><rect x="8.4" y="4.2" width="7.6" height="0.7" fill="#000"/><rect x="8.4" y="7.2" width="7.6" height="0.7" fill="#000"/><rect x="9.4" y="13.4" width="2.2" height="1.5" fill="#000"/><rect x="13.4" y="13.4" width="2.2" height="1.5" fill="#000"/></svg>
<div class="tb" style="left:654px;top:53px;width:23px;height:21px"><div class="ri"></div></div>
<svg style="left:657px;top:56px;overflow:visible" width="16" height="15" viewBox="0 0 16 15" shape-rendering="crispEdges"><path d="M0.3 2.6L5.4 0.2L6.4 2.4L5.2 4L8.2 6.4L10.6 5L11.9 7.4L9.4 11.4L6 11.6L5 9.4L6.4 7.6L3.4 5.2L1.4 5.4Z" fill="#f0f000" stroke="#909000" stroke-width="0.7" shape-rendering="auto"/><path d="M2 3.6L9.6 9.4" stroke="#505000" stroke-width="0.8" fill="none" shape-rendering="auto"/><path d="M9.4 9.8L13.9 13.9" stroke="#000" stroke-width="1.2" fill="none" shape-rendering="auto"/></svg>
<div class="tb" style="left:677px;top:53px;width:23px;height:21px"><div class="ri"></div></div>
<svg style="left:680px;top:56px;overflow:visible" width="16" height="15" viewBox="0 0 16 15" shape-rendering="crispEdges"><rect x="2" y="1" width="12.9" height="12.9" fill="#000080"/><rect x="3" y="4.1" width="10.9" height="8.8" fill="#fff"/><rect x="3" y="2" width="1" height="1" fill="#fff"/><polygon points="7,4.8 7,11.9 11.1,8.4" fill="#909090" shape-rendering="auto"/></svg>
<div class="tb" style="left:708px;top:53px;width:23px;height:21px"><div class="ri"></div></div>
<svg style="left:711px;top:56px;overflow:visible" width="16" height="15" viewBox="0 0 16 15" shape-rendering="crispEdges"><polygon points="7.9,0 15.8,7.5 7.9,15 0,7.5" fill="#a0a0a0" shape-rendering="auto"/><rect x="7.1" y="5.9" width="1.7" height="2.8" fill="#f0f0f0"/><circle cx="4.7" cy="4.9" r="1" fill="#f0f0f0" shape-rendering="auto"/><circle cx="11" cy="4.9" r="1" fill="#f0f0f0" shape-rendering="auto"/><circle cx="4.7" cy="9.8" r="1" fill="#f0f0f0" shape-rendering="auto"/><circle cx="11" cy="9.8" r="1" fill="#f0f0f0" shape-rendering="auto"/></svg>
<div class="tb" style="left:731px;top:53px;width:23px;height:21px"><div class="ri"></div></div>
<svg style="left:734px;top:56px;overflow:visible" width="16" height="15" viewBox="0 0 16 15" shape-rendering="crispEdges"><defs><pattern id="ck" width="2" height="2" patternUnits="userSpaceOnUse"><rect width="1" height="1" fill="#999"/><rect x="1" y="1" width="1" height="1" fill="#999"/></pattern></defs><polygon points="5,0 15.8,0 15.8,11 10.6,11 10.6,8 6,11 3.4,8" fill="url(#ck)" /><path d="M0.4 10L5.2 2.4" stroke="#a0a0a0" stroke-width="1" fill="none" shape-rendering="auto"/><path d="M9 10.6L15.6 3" stroke="#a0a0a0" stroke-width="1" fill="none" shape-rendering="auto"/><polygon points="0,10 2,8 4,10 4,15 0,15" fill="#a0a0a0" shape-rendering="auto"/><rect x="1.4" y="11.4" width="1.3" height="3" fill="#f0f0f0"/><polygon points="5.8,10 7.8,8 9.8,10 9.8,15 5.8,15" fill="#a0a0a0" shape-rendering="auto"/><rect x="7.2" y="11.4" width="1.3" height="3" fill="#f0f0f0"/><rect x="5.6" y="4" width="3" height="0.8" fill="#a0a0a0"/><rect x="6.7" y="2.8" width="0.8" height="3.2" fill="#a0a0a0"/></svg>
<div class="tb" style="left:754px;top:53px;width:23px;height:21px"><div class="ri"></div></div>
<svg style="left:757px;top:56px;overflow:visible" width="16" height="15" viewBox="0 0 16 15" shape-rendering="crispEdges"><polygon points="4.2,0.4 9.4,0.4 12.4,3.4 12.4,8.4 9.4,11.4 4.2,11.4 1.2,8.4 1.2,3.4" fill="#ececec" stroke="#a0a0a0" stroke-width="1.1" shape-rendering="auto"/><path d="M10.4 8.6L15.4 14.2" stroke="#a0a0a0" stroke-width="2.2" fill="none" shape-rendering="auto"/><path d="M10.2 9.6L14.4 14.4" stroke="#dcdcdc" stroke-width="0.7" fill="none" shape-rendering="auto"/><rect x="4.3" y="5.5" width="5" height="1" fill="#a0a0a0"/><rect x="6.3" y="3.4" width="1" height="5.2" fill="#a0a0a0"/></svg>
<div class="tb" style="left:777px;top:53px;width:23px;height:21px"><div class="ri"></div></div>
<svg style="left:780px;top:56px;overflow:visible" width="16" height="15" viewBox="0 0 16 15" shape-rendering="crispEdges"><polygon points="4.2,0.4 9.4,0.4 12.4,3.4 12.4,8.4 9.4,11.4 4.2,11.4 1.2,8.4 1.2,3.4" fill="#ececec" stroke="#a0a0a0" stroke-width="1.1" shape-rendering="auto"/><path d="M10.4 8.6L15.4 14.2" stroke="#a0a0a0" stroke-width="2.2" fill="none" shape-rendering="auto"/><path d="M10.2 9.6L14.4 14.4" stroke="#dcdcdc" stroke-width="0.7" fill="none" shape-rendering="auto"/><rect x="4.3" y="5.5" width="5" height="1" fill="#a0a0a0"/></svg>
<div class="tp" style="left:800px;top:53px;width:23px;height:21px"></div>
<svg style="left:804px;top:57px" width="16" height="15" viewBox="0 0 16 15" shape-rendering="crispEdges"><rect x="0" y="3" width="16" height="8" fill="#999"/><text x="0.6" y="9.6" font-size="6.8" stroke="#fff" stroke-width="0.25" font-weight="bold" font-family="Liberation Sans,sans-serif" fill="#fff" textLength="15" lengthAdjust="spacingAndGlyphs">Street</text></svg>
<div class="tb" style="left:823px;top:53px;width:23px;height:21px"><div class="ri"></div></div>
<svg style="left:826px;top:56px;overflow:visible" width="16" height="15" viewBox="0 0 16 15" shape-rendering="crispEdges"><rect x="0" y="1.2" width="10" height="0.8" fill="#000"/><rect x="8.9" y="0" width="0.8" height="3" fill="#000"/><rect x="0" y="4" width="1" height="0.9" fill="#00a000"/><rect x="0" y="6.9" width="1" height="0.8" fill="#00a000"/><rect x="0" y="9.8" width="1" height="1.1" fill="#00a000"/><rect x="0" y="10.9" width="4" height="0.8" fill="#000"/><rect x="9.7" y="2.4" width="1" height="1.6" fill="#000"/><path d="M3.4 4.5H13.6L15.3 6.2V13L13.6 14.3H3.4Z" fill="#e4e4e4" stroke="#000" stroke-width="1" shape-rendering="auto"/><path d="M5 7L10.6 13M7.6 5.6L14 12.4M11.4 5.6L14.6 9" stroke="#b8b8b8" stroke-width="1.5" fill="none" shape-rendering="auto"/><rect x="4.8" y="13" width="1.2" height="0.9" fill="#00a000"/><rect x="7.4" y="13" width="1.2" height="0.9" fill="#00a000"/><rect x="10" y="13" width="1.2" height="0.9" fill="#00a000"/><rect x="3" y="6" width="0.9" height="0.9" fill="#00a000"/></svg>
<div class="tb" style="left:846px;top:53px;width:23px;height:21px"><div class="ri"></div></div>
<svg style="left:849px;top:56px;overflow:visible" width="16" height="15" viewBox="0 0 16 15" shape-rendering="crispEdges"><polygon points="3.1,0 3.1,11.6 6,8.9 8.4,14.8 10.8,13.8 8.4,8.2 12.8,7.8" fill="#a0a0a0" shape-rendering="auto"/></svg>
<div class="tb" style="left:877px;top:53px;width:23px;height:21px"><div class="ri"></div></div>
<svg style="left:880px;top:56px;overflow:visible" width="16" height="15" viewBox="0 0 16 15" shape-rendering="crispEdges"><path d="M8 0.2Q11.6 4.6 15.4 0.2M9.8 0Q11.6 2.4 13.6 0" stroke="#00ffff" stroke-width="0.9" fill="none" shape-rendering="auto"/><polygon points="0.2,6 2,4.2 15.3,4.2 15.3,12.6 13.4,14.6 0.2,14.6" fill="#d8d8d8" shape-rendering="auto"/><rect x="0.2" y="5.2" width="13" height="1" fill="#fff"/><rect x="1.2" y="6.4" width="11.4" height="6.6" fill="#000"/><rect x="2.8" y="7.9" width="1.5" height="1" fill="#00ff00"/><rect x="5.6" y="7.9" width="1.9" height="1" fill="#00ff00"/><rect x="8.3" y="7.9" width="3.3" height="1" fill="#00ff00"/><rect x="2.8" y="10.3" width="1.5" height="1" fill="#00ff00"/><rect x="5.6" y="10.3" width="1.9" height="1" fill="#00ff00"/><rect x="8.3" y="10.3" width="3.3" height="1" fill="#00ff00"/><rect x="0.8" y="13.6" width="12" height="0.9" fill="#909090"/><polygon points="12.8,6.4 15.3,4.4 15.3,12.4 12.8,14.4" fill="#b0b0b0" shape-rendering="auto"/></svg>
<div class="tb" style="left:900px;top:53px;width:23px;height:21px"><div class="ri"></div></div>
<svg style="left:903px;top:56px;overflow:visible" width="16" height="15" viewBox="0 0 16 15" shape-rendering="crispEdges"><rect x="2.7" y="0" width="1.6" height="13.4" fill="#000"/><rect x="1.2" y="7.8" width="4.6" height="1" fill="#000"/><rect x="2" y="12" width="3" height="1.2" fill="#000"/><rect x="0.3" y="13.2" width="6.2" height="1.3" fill="#000"/><path d="M0.4 1Q0.8 6 2.4 7.4M5 7Q9 6 10 0.4M4.6 5Q7 4.4 7.6 0.6" stroke="#00ffff" stroke-width="0.9" fill="none" shape-rendering="auto"/><rect x="7.4" y="4.8" width="8.5" height="8.8" fill="#000080"/><rect x="8.4" y="6.384" width="2.75" height="2.64" fill="#fff"/><rect x="12.15" y="6.384" width="2.75" height="2.64" fill="#fff"/><polygon points="8.4,11.484 10.4625,10.784 11.15,12.684000000000001 8.4,12.684000000000001" fill="#ffff00" shape-rendering="auto"/><polygon points="14.9,11.484 12.8375,10.784 12.15,12.684000000000001 14.9,12.684000000000001" fill="#ffff00" shape-rendering="auto"/><rect x="8.200000000000001" y="13.600000000000001" width="2" height="1" fill="#000"/><rect x="13.100000000000001" y="13.600000000000001" width="2" height="1" fill="#000"/><rect x="7.4" y="11.4" width="8.5" height="0.8" fill="#ff0000"/></svg>
<div class="tb" style="left:923px;top:53px;width:23px;height:21px"><div class="ri"></div></div>
<svg style="left:926px;top:56px;overflow:visible" width="16" height="15" viewBox="0 0 16 15" shape-rendering="crispEdges"><rect x="7.5" y="0.9" width="1.4" height="3.9" fill="#000"/><path d="M5.3 4.6H10.5Q12 4.6 12 6.4V11Q12 14.3 9.4 14.3H6.4Q3.8 14.3 3.8 11V6.4Q3.8 4.6 5.3 4.6Z" fill="#fff" stroke="#000" stroke-width="1" shape-rendering="auto"/><rect x="5.2" y="6.9" width="4.2" height="3.6" fill="#ff0000"/><rect x="7.2" y="7.6" width="0.9" height="2.4" fill="#000"/><rect x="12.4" y="6.9" width="0.9" height="3.1" fill="#c8c000"/><rect x="5.8" y="12" width="3.6" height="0.8" fill="#000"/></svg>
<div class="tb" style="left:954px;top:53px;width:23px;height:21px"><div class="ri"></div></div>
<svg style="left:957px;top:56px;overflow:visible" width="16" height="15" viewBox="0 0 16 15" shape-rendering="crispEdges"><polygon points="5.7,0.9 10.3,0.9 10.3,4 9,9.5 7,9.5 5.7,4" fill="#0000ff" shape-rendering="auto"/><circle cx="8" cy="11.9" r="2.2" fill="#0000ff" shape-rendering="auto"/></svg>
<div class="tb" style="left:985px;top:53px;width:23px;height:21px"><div class="ri"></div></div>
<svg style="left:988px;top:56px;overflow:visible" width="16" height="15" viewBox="0 0 16 15" shape-rendering="crispEdges"><defs><radialGradient id="hg" cx="0.4" cy="0.3" r="0.8"><stop offset="0" stop-color="#4fb4dc"/><stop offset="1" stop-color="#15619a"/></radialGradient></defs><circle cx="8" cy="7.5" r="7.4" fill="url(#hg)" stroke="#8fd0e8" stroke-width="0.6" shape-rendering="auto"/><text x="4.2" y="12.3" font-size="13" font-weight="bold" font-family="Liberation Sans,sans-serif" fill="#fff">?</text></svg>
<div class="tb" style="left:9px;top:78px;width:23px;height:21px"><div class="ri"></div></div>
<svg style="left:12px;top:81px;overflow:visible" width="16" height="15" viewBox="0 0 16 15" shape-rendering="crispEdges"><rect x="6.4" y="0" width="6.3" height="12.6" fill="#000"/><polygon points="3.3,1.1 9,2.2 9,15.2 3.3,13.6" fill="#ffff00" shape-rendering="auto"/><path d="M3.3 1.1L9 2.2V15L3.3 13.6Z" stroke="#909060" stroke-width="0.8" fill="none" shape-rendering="auto"/><rect x="7.3" y="6.9" width="1.7" height="3.1" fill="#707050"/><rect x="8" y="7.8" width="1" height="1.3" fill="#ffff00"/></svg>
<div class="tb" style="left:40px;top:78px;width:23px;height:21px"><div class="ri"></div></div>
<svg style="left:43px;top:81px;overflow:visible" width="16" height="15" viewBox="0 0 16 15" shape-rendering="crispEdges"><polygon points="2.8,0.9 6,0.9 6.6,4.4 6.6,13.6 0.2,13.6 0.2,7.4" fill="#000" shape-rendering="auto"/><polygon points="9.2,0.9 12.4,0.9 15,7.4 15,13.6 8.6,13.6 8.6,4.4" fill="#000" shape-rendering="auto"/><rect x="6" y="5.2" width="3.2" height="3.2" fill="#000"/><rect x="1.4" y="9" width="0.9" height="1.8" fill="#fff"/><rect x="9.8" y="9" width="0.9" height="1.8" fill="#fff"/><rect x="1.6" y="12" width="3.4" height="0.7" fill="#fff"/><rect x="10" y="12" width="3.4" height="0.7" fill="#fff"/><rect x="4" y="2" width="0.8" height="2.2" fill="#fff"/><rect x="10.6" y="2" width="0.8" height="2.2" fill="#fff"/></svg>
<div class="tb" style="left:63px;top:78px;width:23px;height:21px"><div class="ri"></div></div>
<svg style="left:66px;top:81px;overflow:visible" width="16" height="15" viewBox="0 0 16 15" shape-rendering="crispEdges"><rect x="4.3" y="2" width="1.8" height="10.6" fill="#0000ff"/><polygon points="11.8,2 11.8,12.6 6,7.3" fill="#0000ff" shape-rendering="auto"/></svg>
<div class="tb" style="left:86px;top:78px;width:23px;height:21px"><div class="ri"></div></div>
<svg style="left:89px;top:81px;overflow:visible" width="16" height="15" viewBox="0 0 16 15" shape-rendering="crispEdges"><polygon points="11.5,2 11.5,12.6 5.8,7.3" fill="#0000ff" shape-rendering="auto"/></svg>
<div class="tb" style="left:109px;top:78px;width:23px;height:21px"><div class="ri"></div></div>
<svg style="left:112px;top:81px;overflow:visible" width="16" height="15" viewBox="0 0 16 15" shape-rendering="crispEdges"><polygon points="5.2,2 5.2,12.6 11.1,7.3" fill="#0000ff" shape-rendering="auto"/></svg>
<div class="tb" style="left:132px;top:78px;width:23px;height:21px"><div class="ri"></div></div>
<svg style="left:135px;top:81px;overflow:visible" width="16" height="15" viewBox="0 0 16 15" shape-rendering="crispEdges"><rect x="10.7" y="2" width="1.9" height="10.6" fill="#0000ff"/><polygon points="5.2,2 5.2,12.6 10.8,7.3" fill="#0000ff" shape-rendering="auto"/></svg>
<div class="tb" style="left:163px;top:78px;width:23px;height:21px"><div class="ri"></div></div>
<svg style="left:166px;top:81px;overflow:visible" width="16" height="15" viewBox="0 0 16 15" shape-rendering="crispEdges"><polygon points="2.5,3.6 10,3.6 12.6,6.4 12.6,14.8 2.5,14.8" fill="#fff" shape-rendering="auto"/><path d="M2.5 3.6H10L12.6 6.4V14.8H2.5Z" stroke="#000" stroke-width="1" fill="none" shape-rendering="auto"/><path d="M10 3.6V6.4H12.6" stroke="#000" stroke-width="0.9" fill="none" shape-rendering="auto"/><path d="M0.4 1L7 7.6M7 1L0.4 7.6M3.7 0V8.6M0 4.3H7.6" stroke="#ffff00" stroke-width="1.1" fill="none" shape-rendering="auto"/></svg>
<div class="tb" style="left:186px;top:78px;width:23px;height:21px"><div class="ri"></div></div>
<svg style="left:189px;top:81px;overflow:visible" width="16" height="15" viewBox="0 0 16 15" shape-rendering="crispEdges"><rect x="1.2" y="0.9" width="13.8" height="13.8" fill="#a0a0a0"/><rect x="4.6" y="1.6" width="8.3" height="5.3" fill="#f0f0f0"/><rect x="11" y="2.2" width="1.2" height="1.8" fill="#a0a0a0"/><rect x="5.4" y="9.6" width="7.6" height="5.1" fill="#b4b4b4"/><rect x="10.3" y="11" width="2.1" height="2.6" fill="#f0f0f0"/></svg>
<div class="tb" style="left:209px;top:78px;width:23px;height:21px"><div class="ri"></div></div>
<svg style="left:212px;top:81px;overflow:visible" width="16" height="15" viewBox="0 0 16 15" shape-rendering="crispEdges"><rect x="2.2" y="0.9" width="12.7" height="13.8" fill="#000"/><rect x="4.2" y="1.6" width="8.4" height="6.6" fill="#fff"/><rect x="13.4" y="1.6" width="0.9" height="12" fill="#fff"/><polygon points="5.6,14.7 7.4,9.6 9.6,9.6 11.4,14.7" fill="#000" shape-rendering="auto"/><path d="M0.4 0.4L14 15M13.6 0.8L1.6 13.2" stroke="#ff0000" stroke-width="1.7" fill="none" shape-rendering="auto"/></svg>
<div class="tb" style="left:232px;top:78px;width:23px;height:21px"><div class="ri"></div></div>
<svg style="left:235px;top:81px;overflow:visible" width="16" height="15" viewBox="0 0 16 15" shape-rendering="crispEdges"><path d="M1.4 2.8L12.6 13.4" stroke="#000" stroke-width="2.3" fill="none" shape-rendering="auto"/><path d="M13.6 2.2L2.6 11.6" stroke="#000" stroke-width="2.3" fill="none" shape-rendering="auto"/><path d="M12.6 13.4L13.8 15" stroke="#000" stroke-width="1" fill="none" shape-rendering="auto"/><path d="M2.6 11.6L3.4 13.4" stroke="#000" stroke-width="1.6" fill="none" shape-rendering="auto"/></svg>
<div class="tb" style="left:288px;top:78px;width:23px;height:21px"><div class="ri"></div></div>
<svg style="left:291px;top:81px;overflow:visible" width="16" height="15" viewBox="0 0 16 15" shape-rendering="crispEdges"><rect x="0.4" y="3.8" width="14.4" height="7.4" fill="#bcbcbc"/><rect x="1.2" y="4.6" width="12.8" height="5.8" fill="#f4f4f4"/><rect x="2.2" y="4.6" width="2.2" height="2.4" fill="#b4b4b4"/><rect x="5.4" y="4.6" width="2.2" height="2.4" fill="#b4b4b4"/><rect x="8.6" y="4.6" width="2.2" height="2.4" fill="#b4b4b4"/><rect x="11.8" y="4.6" width="2.2" height="2.4" fill="#b4b4b4"/><rect x="1.2" y="8.4" width="12.8" height="0.8" fill="#c4c4c4"/><rect x="2.2" y="11.2" width="2.4" height="1.6" fill="#b0b0b0"/><rect x="10.6" y="11.2" width="2.4" height="1.6" fill="#b0b0b0"/><rect x="0.4" y="12.8" width="14.8" height="0.8" fill="#fcfcfc"/></svg>
<div class="tb" style="left:311px;top:78px;width:23px;height:21px"><div class="ri"></div></div>
<svg style="left:314px;top:81px;overflow:visible" width="16" height="15" viewBox="0 0 16 15" shape-rendering="crispEdges"><rect x="-0.7" y="0" width="15.6" height="15.4" fill="#b0b0b0"/><rect x="0.7" y="1.4" width="12.8" height="12.6" fill="#efefef"/><rect x="6.6" y="1" width="1" height="13.4" fill="#b8b8b8"/><rect x="0.7" y="7.3" width="12.8" height="1" fill="#b8b8b8"/><text x="1.8" y="6.9" font-size="6.6" font-weight="bold" font-family="Liberation Sans,sans-serif" fill="#b0b0b0">1</text><text x="8.8" y="6.9" font-size="6.6" font-weight="bold" font-family="Liberation Sans,sans-serif" fill="#b0b0b0">2</text><rect x="1.8" y="9.8" width="3.8" height="0.9" fill="#b8b8b8"/><rect x="1.8" y="11.8" width="3.8" height="0.9" fill="#b8b8b8"/><rect x="8.8" y="9.8" width="3.8" height="0.9" fill="#b8b8b8"/><rect x="8.8" y="11.8" width="3.8" height="0.9" fill="#b8b8b8"/></svg>
<div class="tb" style="left:334px;top:78px;width:23px;height:21px"><div class="ri"></div></div>
<svg style="left:337px;top:81px;overflow:visible" width="16" height="15" viewBox="0 0 16 15" shape-rendering="crispEdges"><path d="M0 0.8L6 7" stroke="#000" stroke-width="2" fill="none" shape-rendering="auto"/><polygon points="5.2,5.8 9.4,5.3 15.1,11.5 12,15.2 5.7,8.9" fill="#000" shape-rendering="auto"/><polygon points="8,7.2 9.2,7 13.4,11.6 11.8,13.4 7.6,9.2" fill="#fff" shape-rendering="auto"/><circle cx="7.4" cy="7.6" r="1" fill="#000" shape-rendering="auto"/></svg>
<div class="tb" style="left:388px;top:78px;width:23px;height:21px"><div class="ri"></div></div>
<svg style="left:391px;top:81px;overflow:visible" width="16" height="15" viewBox="0 0 16 15" shape-rendering="crispEdges"><polygon points="3.9,5.8 4.9,0.9 12.8,0.9 13.8,5.8" fill="#fff" shape-rendering="auto"/><path d="M3.9 5.8L4.9 0.9H12.8L13.8 5.8" stroke="#000" stroke-width="0.9" fill="none" shape-rendering="auto"/><path d="M6 2.4L7 3.2L8 2.4L9 3.2L10 2.4L11 3.2" stroke="#404040" stroke-width="0.8" fill="none" shape-rendering="auto"/><path d="M5.6 4.2L6.6 5L7.6 4.2L8.6 5L9.6 4.2L10.6 5L11.6 4.2" stroke="#404040" stroke-width="0.8" fill="none" shape-rendering="auto"/><polygon points="0.4,7.8 2.4,5.8 15.8,5.8 15.8,12 13.4,15.2 0.4,15.2" fill="#000" shape-rendering="auto"/><polygon points="1.4,8 3,6.6 14.6,6.6 13,8" fill="#fff" shape-rendering="auto"/><rect x="1.2" y="9.4" width="11.8" height="2.8" fill="#c4c4c4"/><rect x="7.6" y="10.4" width="2.6" height="1.2" fill="#ffff00"/><polygon points="13.6,8.6 15.2,6.8 15.2,11.6 13.6,13.4" fill="#808080" shape-rendering="auto"/><rect x="1.2" y="12.6" width="11.8" height="1.4" fill="#404040"/></svg>
<div class="tb" style="left:427px;top:78px;width:23px;height:21px"><div class="ri"></div></div>
<svg style="left:430px;top:81px;overflow:visible" width="16" height="15" viewBox="0 0 16 15" shape-rendering="crispEdges"><rect x="4.2" y="0.6" width="10.6" height="2.4" fill="#000"/><rect x="5.2" y="1.2999999999999998" width="9.6" height="1" fill="#fff"/><rect x="4.2" y="4.4" width="10.6" height="2.4" fill="#000"/><rect x="5.2" y="5.1000000000000005" width="9.6" height="1" fill="#fff"/><rect x="4.2" y="8.2" width="10.6" height="2.4" fill="#000"/><rect x="5.2" y="8.899999999999999" width="9.6" height="1" fill="#fff"/><rect x="4.2" y="12.4" width="10.6" height="2.4" fill="#000"/><rect x="5.2" y="13.1" width="9.6" height="1" fill="#fff"/><path d="M0.4 1.6L1.8 3.2L4 0.20000000000000018" stroke="#0000ff" stroke-width="1" fill="none" shape-rendering="auto"/><path d="M0.4 5.4L1.8 7.0L4 4.0" stroke="#0000ff" stroke-width="1" fill="none" shape-rendering="auto"/><path d="M0.4 13.4L1.8 15.0L4 12.0" stroke="#0000ff" stroke-width="1" fill="none" shape-rendering="auto"/></svg>
<div class="tb" style="left:450px;top:78px;width:23px;height:21px"><div class="ri"></div></div>
<svg style="left:453px;top:81px;overflow:visible" width="16" height="15" viewBox="0 0 16 15" shape-rendering="crispEdges"><rect x="13.2" y="0" width="1.6" height="2.4" fill="#0000ff"/><rect x="2.2" y="2.2" width="12.8" height="6.8" fill="#0000ff"/><rect x="3.1" y="3.7" width="4.6" height="3.5" fill="#fff"/><rect x="9.4" y="3.7" width="4.9" height="3.5" fill="#fff"/><rect x="1.2" y="8.2" width="14.8" height="5" fill="#2828f0"/><rect x="5.4" y="9.3" width="6.8" height="3.3" fill="#808080"/><path d="M5.4 10.4H12.2M5.4 11.6H12.2" stroke="#606060" stroke-width="0.5" fill="none" shape-rendering="auto"/><rect x="2.4" y="9.6" width="2" height="1.8" fill="#9a9a9a"/><rect x="13.2" y="9.6" width="2" height="1.8" fill="#9a9a9a"/><rect x="0.8" y="13" width="15.2" height="1" fill="#000060"/><rect x="1.8" y="14" width="3.2" height="1.2" fill="#000"/><rect x="12.6" y="14" width="3.2" height="1.2" fill="#000"/></svg>
<div class="tb" style="left:473px;top:78px;width:23px;height:21px"><div class="ri"></div></div>
<svg style="left:476px;top:81px;overflow:visible" width="16" height="15" viewBox="0 0 16 15" shape-rendering="crispEdges"><rect x="0.1" y="0.3" width="9.4" height="10.6" fill="#000080"/><polygon points="1.4,1.6 6,1.6 6,3.4 8.4,3.4 8.4,9 1.4,9" fill="#ffff00" shape-rendering="auto"/><rect x="2.6" y="5.8" width="2.2" height="0.8" fill="#000080"/><rect x="0.1" y="6.8" width="1" height="2.2" fill="#ff0000"/><rect x="1.2" y="10" width="3.2" height="2.6" fill="#000"/><rect x="6.4" y="3.2" width="9.5" height="10.4" fill="#000080"/><polygon points="7.6,4.2 12.4,4.2 12.4,5.8 14.8,5.8 14.8,11.6 7.6,11.6" fill="#ffff00" shape-rendering="auto"/><rect x="9.4" y="7.2" width="4.2" height="0.8" fill="#000080"/><rect x="11.6" y="5.4" width="2.2" height="0.7" fill="#000080"/><rect x="9.4" y="9.4" width="4.2" height="0.8" fill="#000080"/><rect x="6.4" y="9.6" width="0.8" height="2" fill="#ff0000"/><rect x="15.2" y="9.6" width="0.8" height="2" fill="#ff0000"/><rect x="7.4" y="12.6" width="2.6" height="2.1" fill="#000"/><rect x="12" y="12.6" width="3.2" height="2.1" fill="#000"/></svg>
<div class="tb" style="left:496px;top:78px;width:23px;height:21px"><div class="ri"></div></div>
<svg style="left:499px;top:81px;overflow:visible" width="16" height="15" viewBox="0 0 16 15" shape-rendering="crispEdges"><path d="M0.2 9L2 5.4L6.4 3.4L9.6 4.6L11 2.8H14.4L15.6 5.4L14.4 8.4V15.2H3.4V11L1 10.6Z" fill="#a0a0a0" shape-rendering="auto"/><rect x="12" y="0.6" width="2.8" height="2.6" fill="#f0f0f0"/><path d="M12 0.6H14.8V3.2H12Z" stroke="#a0a0a0" stroke-width="0.8" fill="none" /><rect x="7.4" y="6.8" width="1.5" height="1.7" fill="#f0f0f0"/><rect x="7.4" y="9.6" width="1.5" height="1.7" fill="#f0f0f0"/><rect x="7.4" y="12.4" width="1.5" height="1.7" fill="#f0f0f0"/><rect x="9.8" y="6.8" width="1.5" height="1.7" fill="#f0f0f0"/><rect x="9.8" y="9.6" width="1.5" height="1.7" fill="#f0f0f0"/><rect x="9.8" y="12.4" width="1.5" height="1.7" fill="#f0f0f0"/><rect x="12.2" y="6.8" width="1.5" height="1.7" fill="#f0f0f0"/><rect x="12.2" y="9.6" width="1.5" height="1.7" fill="#f0f0f0"/><rect x="12.2" y="12.4" width="1.5" height="1.7" fill="#f0f0f0"/><rect x="4.6" y="12.4" width="1.5" height="1.7" fill="#f0f0f0"/></svg>
<div class="tb" style="left:519px;top:78px;width:23px;height:21px"><div class="ri"></div></div>
<svg style="left:522px;top:81px;overflow:visible" width="16" height="15" viewBox="0 0 16 15" shape-rendering="crispEdges"><path d="M4.6 6.4V4.4Q4.6 2.2 6.7 2.2Q8.8 2.2 8.8 4.4V6" stroke="#a0a0a0" stroke-width="2.2" fill="none" shape-rendering="auto"/><path d="M0.9 5.8H10.6Q15.4 6.6 15 10.4Q14.6 12.8 12.6 14.7H0.9Z" fill="#a0a0a0" shape-rendering="auto"/><rect x="5.4" y="3.6" width="2.6" height="0.8" fill="#f0f0f0"/></svg>
<div style="left:1px;top:101px;width:1284px;height:1px;background:#fff"></div>
<div style="left:1px;top:102px;width:1284px;height:1px;background:#a0a0a0"></div>
<div style="left:1px;top:103px;width:1284px;height:1px;background:#696969"></div>
<div style="left:1px;top:104px;width:1px;height:706px;background:#a0a0a0"></div>
<div style="left:2px;top:104px;width:1px;height:706px;background:#696969"></div>
<div style="left:3px;top:104px;width:1px;height:706px;background:#fff"></div>
<div style="left:1283px;top:126px;width:1px;height:684px;background:#a0a0a0"></div>
<div style="left:1284px;top:104px;width:1px;height:706px;background:#fff"></div>
<div style="left:3px;top:125px;width:1280px;height:1px;background:#fff"></div>
<div style="left:3px;top:104px;width:43px;height:22px;background:#f0f0f0;border-left:1px solid #fff;border-top:1px solid #fff"></div>
<div style="left:44px;top:106px;width:1px;height:19px;background:#a0a0a0"></div>
<div style="left:45px;top:107px;width:1px;height:18px;background:#696969"></div>
<span class="t" style="left:14.5px;top:109px;font-size:12px;line-height:15px;transform:scaleX(0.8740);"><u>R</u>uns</span>
<div style="left:46px;top:107px;width:38px;height:1px;background:#fff"></div>
<div style="left:46px;top:107px;width:1px;height:18px;background:#fff"></div>
<div style="left:83px;top:108px;width:1px;height:17px;background:#a0a0a0"></div>
<div style="left:84px;top:109px;width:1px;height:16px;background:#696969"></div>
<span class="t" style="left:53.7px;top:110px;font-size:12px;line-height:15px;transform:scaleX(0.8631);">D<u>e</u>tail</span>
<div style="left:85px;top:107px;width:74px;height:1px;background:#fff"></div>
<div style="left:85px;top:107px;width:1px;height:18px;background:#fff"></div>
<div style="left:158px;top:108px;width:1px;height:17px;background:#a0a0a0"></div>
<div style="left:159px;top:109px;width:1px;height:16px;background:#696969"></div>
<span class="t" style="left:94.8px;top:110px;font-size:12px;line-height:15px;transform:scaleX(0.8733);">Para Service</span>
<div style="left:160px;top:107px;width:109px;height:1px;background:#fff"></div>
<div style="left:160px;top:107px;width:1px;height:18px;background:#fff"></div>
<div style="left:268px;top:108px;width:1px;height:17px;background:#a0a0a0"></div>
<div style="left:269px;top:109px;width:1px;height:16px;background:#696969"></div>
<span class="t" style="left:167.5px;top:110px;font-size:12px;line-height:15px;transform:scaleX(0.8729);">Supp<u>l</u>ementary Data</span>
<div style="left:270px;top:107px;width:73px;height:1px;background:#fff"></div>
<div style="left:270px;top:107px;width:1px;height:18px;background:#fff"></div>
<div style="left:342px;top:108px;width:1px;height:17px;background:#a0a0a0"></div>
<div style="left:343px;top:109px;width:1px;height:16px;background:#696969"></div>
<span class="t" style="left:277.5px;top:110px;font-size:12px;line-height:15px;transform:scaleX(0.8586);">Para Esc<u>o</u>rts</span>
<div style="left:344px;top:107px;width:92px;height:1px;background:#fff"></div>
<div style="left:344px;top:107px;width:1px;height:18px;background:#fff"></div>
<div style="left:435px;top:108px;width:1px;height:17px;background:#a0a0a0"></div>
<div style="left:436px;top:109px;width:1px;height:16px;background:#696969"></div>
<span class="t" style="left:351.5px;top:110px;font-size:12px;line-height:15px;transform:scaleX(0.8765);">Stop Restrictions</span>
<div style="left:6px;top:134px;width:837px;height:122px;border:1px solid #a0a0a0"></div>
<div style="left:7px;top:135px;width:835px;height:1px;background:#fff"></div>
<div style="left:7px;top:135px;width:1px;height:120px;background:#fff"></div>
<div style="left:6px;top:256px;width:838px;height:1px;background:#fff"></div>
<div style="left:843px;top:134px;width:1px;height:123px;background:#fff"></div>
<div style="left:13.5px;top:134px;width:34px;height:2px;background:#f0f0f0"></div>
<span class="t" style="left:15.5px;top:128px;font-size:12px;line-height:15px;transform:scaleX(0.8843);">Select</span>
<svg style="left:14px;top:146px" width="12" height="12" viewBox="0 0 12 12"><circle cx="6" cy="6" r="5.9" fill="#fff"/><circle cx="6" cy="6" r="4.9" fill="#fff" stroke="#8a8a8a" stroke-width="1.5"/><path d="M2.5 9.5A4.9 4.9 0 0 1 9.5 2.5" stroke="#5a5a5a" stroke-width="1.5" fill="none"/><rect x="3.5" y="3.5" width="5" height="5" rx="1.5" fill="#000"/></svg>
<span class="t" style="left:30.5px;top:145px;color:#0a0a28;letter-spacing:-0.22px;text-shadow:0 0 0.4px #0a0a28;">Master</span>
<svg style="left:14px;top:167px" width="12" height="12" viewBox="0 0 12 12"><circle cx="6" cy="6" r="5.9" fill="#fff"/><circle cx="6" cy="6" r="4.9" fill="#fff" stroke="#8a8a8a" stroke-width="1.5"/><path d="M2.5 9.5A4.9 4.9 0 0 1 9.5 2.5" stroke="#5a5a5a" stroke-width="1.5" fill="none"/></svg>
<span class="t" style="left:30.5px;top:166px;color:#0a0a28;letter-spacing:-0.49px;text-shadow:0 0 0.4px #0a0a28;">Daily</span>
<div class="ro" style="left:11px;top:208px;width:53px;height:40px"><div class="ri"></div></div>
<span class="t" style="left:21.5px;top:221px;font-size:12px;line-height:15px;transform:scaleX(0.8511);">Di<u>s</u>play</span>
<span class="t" style="left:68px;top:141px;font-size:12px;line-height:15px;transform:scaleX(0.8968);">Schedule Type:</span>
<span class="t" style="left:68px;top:163px;font-size:12px;line-height:15px;transform:scaleX(0.8806);">Schedule:</span>
<span class="t" style="left:68px;top:185px;font-size:12px;line-height:15px;transform:scaleX(0.8610);">SignUp Period:</span>
<span class="t" style="left:68px;top:207px;font-size:12px;line-height:15px;transform:scaleX(0.8682);">Service Group:</span>
<span class="t" style="left:68px;top:229px;font-size:12px;line-height:15px;transform:scaleX(0.8993);">Run Type:</span>
<div class="so" style="left:145px;top:138px;width:117px;height:21px"><div class="si" style=""></div></div>
<div class="ro" style="left:244px;top:140px;width:16px;height:17px"><div class="ri"></div></div>
<svg style="left:249px;top:147px" width="7" height="4" shape-rendering="crispEdges"><polygon points="0,0 7,0 3.5,4" fill="#000"/></svg>
<span class="t" style="left:149px;top:142px;font-size:12px;line-height:15px;transform:scaleX(0.8456);">LIVE</span>
<div class="so" style="left:145px;top:160px;width:100px;height:21px"><div class="si" style=""></div></div>
<div class="ro" style="left:244px;top:160px;width:17px;height:21px"><div class="ri"></div></div>
<span class="t" style="left:248px;top:164px;font-size:12px;line-height:15px;color:#a0a0a0;transform:scaleX(0.8986);">...</span>
<div class="so" style="left:145px;top:182px;width:117px;height:21px"><div class="si" style=""></div></div>
<div class="ro" style="left:244px;top:184px;width:16px;height:17px"><div class="ri"></div></div>
<svg style="left:249px;top:191px" width="7" height="4" shape-rendering="crispEdges"><polygon points="0,0 7,0 3.5,4" fill="#000"/></svg>
<span class="t" style="left:149px;top:186px;font-size:12px;line-height:15px;transform:scaleX(0.9030);">2015_Oct</span>
<div class="so" style="left:145px;top:204px;width:117px;height:21px"><div class="si" style=""></div></div>
<div class="ro" style="left:244px;top:206px;width:16px;height:17px"><div class="ri"></div></div>
<svg style="left:249px;top:213px" width="7" height="4" shape-rendering="crispEdges"><polygon points="0,0 7,0 3.5,4" fill="#000"/></svg>
<span class="t" style="left:150px;top:208px;font-size:12px;line-height:15px;transform:scaleX(0.7477);">1</span>
<div class="so" style="left:145px;top:226px;width:117px;height:21px"><div class="si" style=""></div></div>
<div class="ro" style="left:244px;top:228px;width:16px;height:17px"><div class="ri"></div></div>
<svg style="left:249px;top:235px" width="7" height="4" shape-rendering="crispEdges"><polygon points="0,0 7,0 3.5,4" fill="#000"/></svg>
<span class="t" style="left:268px;top:141px;font-size:12px;line-height:15px;transform:scaleX(0.8295);">From:</span>
<span class="t" style="left:268px;top:162px;font-size:12px;line-height:15px;transform:scaleX(0.9366);">To:</span>
<span class="t" style="left:268px;top:183px;font-size:12px;line-height:15px;transform:scaleX(0.8675);">Run:</span>
<span class="t" style="left:268px;top:205px;font-size:12px;line-height:15px;transform:scaleX(0.8810);">Cap Type:</span>
<span class="t" style="left:268px;top:228px;font-size:12px;line-height:15px;transform:scaleX(0.8640);">Provider:</span>
<div class="so" style="left:319px;top:138px;width:115px;height:20px"><div class="si" style=""></div></div>
<div class="so" style="left:319px;top:159px;width:115px;height:19px"><div class="si" style=""></div></div>
<div class="so" style="left:318px;top:180px;width:116px;height:21px"><div class="si" style=""></div></div>
<div class="ro" style="left:416px;top:182px;width:16px;height:17px"><div class="ri"></div></div>
<svg style="left:421px;top:189px" width="7" height="4" shape-rendering="crispEdges"><polygon points="0,0 7,0 3.5,4" fill="#000"/></svg>
<span class="t" style="left:323px;top:184px;font-size:12px;line-height:15px;transform:scaleX(0.9992);">N/A</span>
<div class="so" style="left:318px;top:203px;width:116px;height:20px"><div class="si" style=""></div></div>
<div class="ro" style="left:416px;top:205px;width:16px;height:16px"><div class="ri"></div></div>
<svg style="left:421px;top:212px" width="7" height="4" shape-rendering="crispEdges"><polygon points="0,0 7,0 3.5,4" fill="#000"/></svg>
<div class="so" style="left:318px;top:225px;width:116px;height:21px"><div class="si" style=""></div></div>
<div class="ro" style="left:416px;top:227px;width:16px;height:17px"><div class="ri"></div></div>
<svg style="left:421px;top:234px" width="7" height="4" shape-rendering="crispEdges"><polygon points="0,0 7,0 3.5,4" fill="#000"/></svg>
<span class="t" style="left:324px;top:229px;font-size:12px;line-height:15px;transform:scaleX(0.8767);">ABC TRANSPO...</span>
<span class="t" style="left:438.5px;top:141px;font-size:12px;line-height:15px;transform:scaleX(0.8681);">Direction:</span>
<span class="t" style="left:438.5px;top:164px;font-size:12px;line-height:15px;transform:scaleX(0.8418);">Garage:</span>
<span class="t" style="left:438.5px;top:186px;font-size:12px;line-height:15px;transform:scaleX(0.8659);">Run Category:</span>
<span class="t" style="left:438.5px;top:209px;font-size:12px;line-height:15px;transform:scaleX(0.8623);">Run Group:</span>
<div class="so" style="left:510px;top:138px;width:117px;height:21px"><div class="si" style=""></div></div>
<div class="ro" style="left:609px;top:140px;width:16px;height:17px"><div class="ri"></div></div>
<svg style="left:614px;top:147px" width="7" height="4" shape-rendering="crispEdges"><polygon points="0,0 7,0 3.5,4" fill="#000"/></svg>
<span class="t" style="left:515px;top:142px;font-size:12px;line-height:15px;transform:scaleX(0.9992);">N/A</span>
<div class="so" style="left:510px;top:161px;width:100px;height:19px"><div class="si" style=""></div></div>
<div class="ro" style="left:609px;top:161px;width:18px;height:19px"><div class="ri"></div></div>
<span class="t" style="left:614px;top:165px;font-size:12px;line-height:15px;transform:scaleX(0.8986);"><b>...</b></span>
<div class="so" style="left:510px;top:184px;width:117px;height:21px"><div class="si" style=""></div></div>
<div class="ro" style="left:609px;top:186px;width:16px;height:17px"><div class="ri"></div></div>
<svg style="left:614px;top:193px" width="7" height="4" shape-rendering="crispEdges"><polygon points="0,0 7,0 3.5,4" fill="#000"/></svg>
<div class="so" style="left:510px;top:208px;width:99px;height:21px"><div class="si" style=""></div></div>
<div class="ro" style="left:608px;top:208px;width:19px;height:21px"><div class="ri"></div></div>
<span class="t" style="left:614px;top:212px;font-size:12px;line-height:15px;transform:scaleX(0.8986);">...</span>
<span class="t" style="left:630.3px;top:141px;font-size:12px;line-height:15px;transform:scaleX(0.8746);">Para Service:</span>
<span class="t" style="left:630.3px;top:164px;font-size:12px;line-height:15px;transform:scaleX(0.8641);">Para Area:</span>
<span class="t" style="left:630.3px;top:187px;font-size:12px;line-height:15px;transform:scaleX(0.9039);">Day of the Week:</span>
<span class="t" style="left:630.3px;top:210px;font-size:12px;line-height:15px;transform:scaleX(0.8736);">Polygon Types:</span>
<span class="t" style="left:630.3px;top:232px;font-size:12px;line-height:15px;transform:scaleX(0.8633);">Polygons:</span>
<div class="so" style="left:718px;top:138px;width:120px;height:21px"><div class="si" style=""></div></div>
<div class="ro" style="left:820px;top:140px;width:16px;height:17px"><div class="ri"></div></div>
<svg style="left:825px;top:147px" width="7" height="4" shape-rendering="crispEdges"><polygon points="0,0 7,0 3.5,4" fill="#000"/></svg>
<div class="so" style="left:718px;top:161px;width:120px;height:21px"><div class="si" style=""></div></div>
<div class="ro" style="left:820px;top:163px;width:16px;height:17px"><div class="ri"></div></div>
<svg style="left:825px;top:170px" width="7" height="4" shape-rendering="crispEdges"><polygon points="0,0 7,0 3.5,4" fill="#000"/></svg>
<div class="so" style="left:718px;top:184px;width:120px;height:21px"><div class="si" style=""></div></div>
<div class="ro" style="left:820px;top:186px;width:16px;height:17px"><div class="ri"></div></div>
<svg style="left:825px;top:193px" width="7" height="4" shape-rendering="crispEdges"><polygon points="0,0 7,0 3.5,4" fill="#000"/></svg>
<div class="so" style="left:718px;top:207px;width:120px;height:21px"><div class="si" style=""></div></div>
<div class="ro" style="left:820px;top:209px;width:16px;height:17px"><div class="ri"></div></div>
<svg style="left:825px;top:216px" width="7" height="4" shape-rendering="crispEdges"><polygon points="0,0 7,0 3.5,4" fill="#000"/></svg>
<div class="so" style="left:718px;top:230px;width:120px;height:21px"><div class="si" style=""></div></div>
<div class="ro" style="left:820px;top:232px;width:16px;height:17px"><div class="ri"></div></div>
<svg style="left:825px;top:239px" width="7" height="4" shape-rendering="crispEdges"><polygon points="0,0 7,0 3.5,4" fill="#000"/></svg>
<div style="left:6px;top:264px;width:1272px;height:533px;border:1px solid #787878"></div>
<div style="left:7px;top:265px;width:1270px;height:1px;background:#fff"></div>
<div style="left:7px;top:265px;width:1px;height:14px;background:#fff"></div>
<div style="left:7px;top:278px;width:1270px;height:1px;background:#fff"></div>
<div style="left:1278px;top:264px;width:1px;height:534px;background:#fff"></div>
<div style="left:6px;top:797px;width:1273px;height:1px;background:#fff"></div>
<div style="left:7px;top:279px;width:1250px;height:500px;overflow:hidden;background:#fff">
<div style="left:0;top:0;width:1250px;height:28px;background:#f0f0f0;border-top:1px solid #000;border-bottom:1px solid #000"></div>
<div style="left:0;top:1px;width:1250px;height:1px;background:#fff"></div>
<div style="left:0;top:1px;width:1px;height:26px;background:#fff"></div>
<div style="left:36px;top:0;width:1px;height:28px;background:#000"></div>
<div style="left:37px;top:1px;width:1px;height:26px;background:#fff"></div>
<div style="left:128px;top:0;width:1px;height:28px;background:#000"></div>
<div style="left:129px;top:1px;width:1px;height:26px;background:#fff"></div>
<div style="left:182px;top:0;width:1px;height:28px;background:#000"></div>
<div style="left:183px;top:1px;width:1px;height:26px;background:#fff"></div>
<div style="left:237px;top:0;width:1px;height:28px;background:#000"></div>
<div style="left:238px;top:1px;width:1px;height:26px;background:#fff"></div>
<div style="left:291px;top:0;width:1px;height:28px;background:#000"></div>
<div style="left:292px;top:1px;width:1px;height:26px;background:#fff"></div>
<div style="left:394px;top:0;width:1px;height:28px;background:#000"></div>
<div style="left:395px;top:1px;width:1px;height:26px;background:#fff"></div>
<div style="left:497px;top:0;width:1px;height:28px;background:#000"></div>
<div style="left:498px;top:1px;width:1px;height:26px;background:#fff"></div>
<div style="left:682px;top:0;width:1px;height:28px;background:#000"></div>
<div style="left:683px;top:1px;width:1px;height:26px;background:#fff"></div>
<div style="left:800px;top:0;width:1px;height:28px;background:#000"></div>
<div style="left:801px;top:1px;width:1px;height:26px;background:#fff"></div>
<div style="left:903px;top:0;width:1px;height:28px;background:#000"></div>
<div style="left:904px;top:1px;width:1px;height:26px;background:#fff"></div>
<div style="left:1006px;top:0;width:1px;height:28px;background:#000"></div>
<div style="left:1007px;top:1px;width:1px;height:26px;background:#fff"></div>
<div style="left:1079px;top:0;width:1px;height:28px;background:#000"></div>
<div style="left:1080px;top:1px;width:1px;height:26px;background:#fff"></div>
<div style="left:1167px;top:0;width:1px;height:28px;background:#000"></div>
<div style="left:1168px;top:1px;width:1px;height:26px;background:#fff"></div>
<div style="left:1249px;top:0;width:1px;height:28px;background:#000"></div>
<span class="t" style="left:40px;top:7px;font-size:12px;line-height:15px;transform:scaleX(0.8857);">Run</span>
<span class="t" style="left:132px;top:7px;font-size:12px;line-height:15px;transform:scaleX(0.8545);">From Time</span>
<span class="t" style="left:186px;top:7px;font-size:12px;line-height:15px;transform:scaleX(0.9401);">To Time</span>
<span class="t" style="left:241px;top:7px;font-size:12px;line-height:15px;transform:scaleX(0.8649);">Type</span>
<span class="t" style="left:295px;top:7px;font-size:12px;line-height:15px;transform:scaleX(0.8929);">Contract</span>
<span class="t" style="left:398px;top:7px;font-size:12px;line-height:15px;transform:scaleX(0.9095);">Break Rule</span>
<span class="t g" style="left:501px;top:7px;">Driver</span>
<span class="t g" style="left:686px;top:7px;">Capacity Type</span>
<span class="t g" style="left:804px;top:7px;">Vehicle Type</span>
<span class="t g" style="left:907px;top:7px;">Vehicle</span>
<span class="t" style="left:1083px;top:7px;font-size:12px;line-height:15px;transform:scaleX(0.8548);">From Garage</span>
<span class="t" style="left:1171px;top:7px;font-size:12px;line-height:15px;transform:scaleX(0.9100);">To Garage</span>
<span class="t g" style="left:1010px;top:7px">Shift</span>
<span class="t g" style="left:1031.3px;top:7px">d</span>
<div style="left:0;top:28px;width:36px;height:15px;background:#f0f0f0;border-top:1px solid #fff;border-left:1px solid #fff;border-bottom:1px solid #000"></div>
<div style="left:37px;top:42px;width:1213px;height:1px;background:#808080"></div>
<span class="t" style="left:39px;top:28px;font-size:12px;line-height:15px;transform:scaleX(0.8724);">ABC002</span>
<span class="t" style="left:131px;top:28px;font-size:12px;line-height:15px;transform:scaleX(0.8824);">10:00</span>
<span class="t" style="left:185px;top:28px;font-size:12px;line-height:15px;transform:scaleX(0.8824);">18:00</span>
<span class="t" style="left:240px;top:28px;font-size:12px;line-height:15px;transform:scaleX(0.8872);">Para</span>
<span class="t" style="left:294px;top:28px;font-size:12px;line-height:15px;transform:scaleX(0.8967);">DISTANCE RATE</span>
<span class="t" style="left:397px;top:28px;font-size:12px;line-height:15px;transform:scaleX(0.8587);">LUNCH</span>
<span class="t" style="left:1082px;top:28px;font-size:12px;line-height:15px;transform:scaleX(0.8496);">ABC BASE</span>
<span class="t" style="left:1170px;top:28px;font-size:12px;line-height:15px;transform:scaleX(0.8496);">ABC BASE</span>
<div style="left:0;top:43px;width:36px;height:15px;background:#f0f0f0;border-top:1px solid #fff;border-left:1px solid #fff;border-bottom:1px solid #000"></div>
<div style="left:37px;top:57px;width:1213px;height:1px;background:#808080"></div>
<span class="t" style="left:39px;top:43px;font-size:12px;line-height:15px;transform:scaleX(0.8724);">ABC003</span>
<span class="t" style="left:134px;top:43px;font-size:12px;line-height:15px;transform:scaleX(0.8776);">6:00</span>
<span class="t" style="left:185px;top:43px;font-size:12px;line-height:15px;transform:scaleX(0.8824);">14:00</span>
<span class="t" style="left:240px;top:43px;font-size:12px;line-height:15px;transform:scaleX(0.8872);">Para</span>
<span class="t" style="left:294px;top:43px;font-size:12px;line-height:15px;transform:scaleX(0.8967);">DISTANCE RATE</span>
<span class="t" style="left:397px;top:43px;font-size:12px;line-height:15px;transform:scaleX(0.8867);">LUNCH AND</span>
<span class="t" style="left:1082px;top:43px;font-size:12px;line-height:15px;transform:scaleX(0.8496);">ABC BASE</span>
<span class="t" style="left:1170px;top:43px;font-size:12px;line-height:15px;transform:scaleX(0.8496);">ABC BASE</span>
<div style="left:0;top:58px;width:36px;height:15px;background:#f0f0f0;border-top:1px solid #fff;border-left:1px solid #fff;border-bottom:1px solid #000"></div>
<div style="left:37px;top:72px;width:1213px;height:1px;background:#808080"></div>
<span class="t" style="left:39px;top:58px;font-size:12px;line-height:15px;transform:scaleX(0.8724);">ABC004</span>
<span class="t" style="left:134px;top:58px;font-size:12px;line-height:15px;transform:scaleX(0.8776);">8:00</span>
<span class="t" style="left:185px;top:58px;font-size:12px;line-height:15px;transform:scaleX(0.8824);">16:00</span>
<span class="t" style="left:240px;top:58px;font-size:12px;line-height:15px;transform:scaleX(0.8872);">Para</span>
<span class="t" style="left:294px;top:58px;font-size:12px;line-height:15px;transform:scaleX(0.8967);">DISTANCE RATE</span>
<span class="t" style="left:397px;top:58px;font-size:12px;line-height:15px;transform:scaleX(0.9742);">N/A</span>
<span class="t" style="left:1082px;top:58px;font-size:12px;line-height:15px;transform:scaleX(0.8496);">ABC BASE</span>
<span class="t" style="left:1170px;top:58px;font-size:12px;line-height:15px;transform:scaleX(0.8496);">ABC BASE</span>
<div style="left:0;top:73px;width:36px;height:15px;background:#f0f0f0;border-top:1px solid #fff;border-left:1px solid #fff;border-bottom:1px solid #000"></div>
<div style="left:37px;top:87px;width:1213px;height:1px;background:#808080"></div>
<span class="t" style="left:39px;top:73px;font-size:12px;line-height:15px;transform:scaleX(0.8724);">ABC005</span>
<span class="t" style="left:131px;top:73px;font-size:12px;line-height:15px;transform:scaleX(0.8824);">10:00</span>
<span class="t" style="left:185px;top:73px;font-size:12px;line-height:15px;transform:scaleX(0.8824);">18:00</span>
<span class="t" style="left:240px;top:73px;font-size:12px;line-height:15px;transform:scaleX(0.8872);">Para</span>
<span class="t" style="left:294px;top:73px;font-size:12px;line-height:15px;transform:scaleX(0.8967);">DISTANCE RATE</span>
<span class="t" style="left:397px;top:73px;font-size:12px;line-height:15px;transform:scaleX(0.9742);">N/A</span>
<span class="t" style="left:1082px;top:73px;font-size:12px;line-height:15px;transform:scaleX(0.8496);">ABC BASE</span>
<span class="t" style="left:1170px;top:73px;font-size:12px;line-height:15px;transform:scaleX(0.8496);">ABC BASE</span>
<div style="left:0;top:88px;width:36px;height:15px;background:#f0f0f0;border-top:1px solid #fff;border-left:1px solid #fff;border-bottom:1px solid #000"></div>
<div style="left:37px;top:102px;width:1213px;height:1px;background:#808080"></div>
<span class="t" style="left:39px;top:88px;font-size:12px;line-height:15px;transform:scaleX(0.8724);">ABC006</span>
<span class="t" style="left:131px;top:88px;font-size:12px;line-height:15px;transform:scaleX(0.8824);">10:00</span>
<span class="t" style="left:185px;top:88px;font-size:12px;line-height:15px;transform:scaleX(0.8824);">18:00</span>
<span class="t" style="left:240px;top:88px;font-size:12px;line-height:15px;transform:scaleX(0.8872);">Para</span>
<span class="t" style="left:294px;top:88px;font-size:12px;line-height:15px;transform:scaleX(0.8967);">DISTANCE RATE</span>
<span class="t" style="left:397px;top:88px;font-size:12px;line-height:15px;transform:scaleX(0.9742);">N/A</span>
<span class="t" style="left:1082px;top:88px;font-size:12px;line-height:15px;transform:scaleX(0.8496);">ABC BASE</span>
<span class="t" style="left:1170px;top:88px;font-size:12px;line-height:15px;transform:scaleX(0.8496);">ABC BASE</span>
<div style="left:0;top:103px;width:36px;height:15px;background:#f0f0f0;border-top:1px solid #fff;border-left:1px solid #fff;border-bottom:1px solid #000"></div>
<div style="left:37px;top:117px;width:1213px;height:1px;background:#808080"></div>
<span class="t" style="left:39px;top:103px;font-size:12px;line-height:15px;transform:scaleX(0.8724);">ABC010</span>
<span class="t" style="left:134px;top:103px;font-size:12px;line-height:15px;transform:scaleX(0.8776);">8:00</span>
<span class="t" style="left:185px;top:103px;font-size:12px;line-height:15px;transform:scaleX(0.8824);">16:00</span>
<span class="t" style="left:240px;top:103px;font-size:12px;line-height:15px;transform:scaleX(0.8872);">Para</span>
<span class="t" style="left:294px;top:103px;font-size:12px;line-height:15px;transform:scaleX(0.8967);">DISTANCE RATE</span>
<span class="t" style="left:397px;top:103px;font-size:12px;line-height:15px;transform:scaleX(0.9742);">N/A</span>
<span class="t" style="left:1082px;top:103px;font-size:12px;line-height:15px;transform:scaleX(0.8496);">ABC BASE</span>
<span class="t" style="left:1170px;top:103px;font-size:12px;line-height:15px;transform:scaleX(0.8496);">ABC BASE</span>
<div style="left:0;top:118px;width:36px;height:15px;background:#f0f0f0;border-top:1px solid #fff;border-left:1px solid #fff;border-bottom:1px solid #000"></div>
<div style="left:37px;top:132px;width:1213px;height:1px;background:#808080"></div>
<span class="t" style="left:39px;top:118px;font-size:12px;line-height:15px;transform:scaleX(0.8724);">ABC012</span>
<span class="t" style="left:131px;top:118px;font-size:12px;line-height:15px;transform:scaleX(0.8824);">10:00</span>
<span class="t" style="left:185px;top:118px;font-size:12px;line-height:15px;transform:scaleX(0.8824);">18:00</span>
<span class="t" style="left:240px;top:118px;font-size:12px;line-height:15px;transform:scaleX(0.8872);">Para</span>
<span class="t" style="left:294px;top:118px;font-size:12px;line-height:15px;transform:scaleX(0.8967);">DISTANCE RATE</span>
<span class="t" style="left:397px;top:118px;font-size:12px;line-height:15px;transform:scaleX(0.9742);">N/A</span>
<span class="t" style="left:1082px;top:118px;font-size:12px;line-height:15px;transform:scaleX(0.8496);">ABC BASE</span>
<span class="t" style="left:1170px;top:118px;font-size:12px;line-height:15px;transform:scaleX(0.8496);">ABC BASE</span>
<div style="left:37px;top:133px;width:1212px;height:14px;background:#0078d7"></div>
<div style="left:0;top:133px;width:36px;height:15px;background:#f0f0f0;border-top:1px solid #fff;border-left:1px solid #fff;border-bottom:1px solid #000"></div>
<div style="left:37px;top:147px;width:1213px;height:1px;background:#808080"></div>
<span class="t" style="left:39px;top:133px;font-size:12px;line-height:15px;color:#fff;transform:scaleX(0.8724);">ABC017</span>
<span class="t" style="left:131px;top:133px;font-size:12px;line-height:15px;color:#fff;transform:scaleX(0.8824);">10:00</span>
<span class="t" style="left:185px;top:133px;font-size:12px;line-height:15px;color:#fff;transform:scaleX(0.8824);">18:00</span>
<span class="t" style="left:240px;top:133px;font-size:12px;line-height:15px;color:#fff;transform:scaleX(0.8872);">Para</span>
<span class="t" style="left:294px;top:133px;font-size:12px;line-height:15px;color:#fff;transform:scaleX(0.8967);">DISTANCE RATE</span>
<span class="t" style="left:397px;top:133px;font-size:12px;line-height:15px;color:#fff;transform:scaleX(0.9742);">N/A</span>
<span class="t" style="left:1082px;top:133px;font-size:12px;line-height:15px;color:#fff;transform:scaleX(0.8496);">ABC BASE</span>
<span class="t" style="left:1170px;top:133px;font-size:12px;line-height:15px;color:#fff;transform:scaleX(0.8496);">ABC BASE</span>
<div style="left:37px;top:148px;width:1212px;height:14px;background:#0078d7"></div>
<div style="left:0;top:148px;width:36px;height:15px;background:#f0f0f0;border-top:1px solid #fff;border-left:1px solid #fff;border-bottom:1px solid #000"></div>
<div style="left:37px;top:162px;width:1213px;height:1px;background:#808080"></div>
<span class="t" style="left:39px;top:148px;font-size:12px;line-height:15px;color:#fff;transform:scaleX(0.8724);">ABC020</span>
<span class="t" style="left:131px;top:148px;font-size:12px;line-height:15px;color:#fff;transform:scaleX(0.8824);">10:00</span>
<span class="t" style="left:185px;top:148px;font-size:12px;line-height:15px;color:#fff;transform:scaleX(0.8824);">18:00</span>
<span class="t" style="left:240px;top:148px;font-size:12px;line-height:15px;color:#fff;transform:scaleX(0.8872);">Para</span>
<span class="t" style="left:294px;top:148px;font-size:12px;line-height:15px;color:#fff;transform:scaleX(0.8967);">DISTANCE RATE</span>
<span class="t" style="left:397px;top:148px;font-size:12px;line-height:15px;color:#fff;transform:scaleX(0.9742);">N/A</span>
<span class="t" style="left:1082px;top:148px;font-size:12px;line-height:15px;color:#fff;transform:scaleX(0.8496);">ABC BASE</span>
<span class="t" style="left:1170px;top:148px;font-size:12px;line-height:15px;color:#fff;transform:scaleX(0.8496);">ABC BASE</span>
<div style="left:37px;top:163px;width:1212px;height:14px;background:#0078d7"></div>
<div style="left:0;top:163px;width:36px;height:15px;background:#f0f0f0;border-top:1px solid #fff;border-left:1px solid #fff;border-bottom:1px solid #000"></div>
<div style="left:37px;top:177px;width:1213px;height:1px;background:#808080"></div>
<span class="t" style="left:39px;top:163px;font-size:12px;line-height:15px;color:#fff;transform:scaleX(0.8724);">ABC020</span>
<span class="t" style="left:131px;top:163px;font-size:12px;line-height:15px;color:#fff;transform:scaleX(0.8824);">10:00</span>
<span class="t" style="left:185px;top:163px;font-size:12px;line-height:15px;color:#fff;transform:scaleX(0.8824);">18:00</span>
<span class="t" style="left:240px;top:163px;font-size:12px;line-height:15px;color:#fff;transform:scaleX(0.8872);">Para</span>
<span class="t" style="left:294px;top:163px;font-size:12px;line-height:15px;color:#fff;transform:scaleX(0.8967);">DISTANCE RATE</span>
<span class="t" style="left:397px;top:163px;font-size:12px;line-height:15px;color:#fff;transform:scaleX(0.9742);">N/A</span>
<span class="t" style="left:1082px;top:163px;font-size:12px;line-height:15px;color:#fff;transform:scaleX(0.8496);">ABC BASE</span>
<span class="t" style="left:1170px;top:163px;font-size:12px;line-height:15px;color:#fff;transform:scaleX(0.8496);">ABC BASE</span>
<div style="left:0;top:178px;width:36px;height:15px;background:#f0f0f0;border-top:1px solid #fff;border-left:1px solid #fff;border-bottom:1px solid #000"></div>
<div style="left:37px;top:192px;width:1213px;height:1px;background:#808080"></div>
<span class="t" style="left:39px;top:178px;font-size:12px;line-height:15px;transform:scaleX(0.8724);">ABC021</span>
<span class="t" style="left:131px;top:178px;font-size:12px;line-height:15px;transform:scaleX(0.8824);">16:00</span>
<span class="t" style="left:185px;top:178px;font-size:12px;line-height:15px;transform:scaleX(0.8824);">24:00</span>
<span class="t" style="left:240px;top:178px;font-size:12px;line-height:15px;transform:scaleX(0.8872);">Para</span>
<span class="t" style="left:294px;top:178px;font-size:12px;line-height:15px;transform:scaleX(0.8967);">DISTANCE RATE</span>
<span class="t" style="left:397px;top:178px;font-size:12px;line-height:15px;transform:scaleX(0.9742);">N/A</span>
<span class="t" style="left:1082px;top:178px;font-size:12px;line-height:15px;transform:scaleX(0.8496);">ABC BASE</span>
<span class="t" style="left:1170px;top:178px;font-size:12px;line-height:15px;transform:scaleX(0.8496);">ABC BASE</span>
<div style="left:37px;top:193px;width:1212px;height:14px;background:#0078d7"></div>
<div style="left:0;top:193px;width:36px;height:15px;background:#f0f0f0;border-top:1px solid #fff;border-left:1px solid #fff;border-bottom:1px solid #000"></div>
<div style="left:37px;top:207px;width:1213px;height:1px;background:#808080"></div>
<span class="t" style="left:39px;top:193px;font-size:12px;line-height:15px;color:#fff;transform:scaleX(0.8724);">ABC023</span>
<span class="t" style="left:131px;top:193px;font-size:12px;line-height:15px;color:#fff;transform:scaleX(0.8824);">16:00</span>
<span class="t" style="left:185px;top:193px;font-size:12px;line-height:15px;color:#fff;transform:scaleX(0.8824);">24:00</span>
<span class="t" style="left:240px;top:193px;font-size:12px;line-height:15px;color:#fff;transform:scaleX(0.8872);">Para</span>
<span class="t" style="left:294px;top:193px;font-size:12px;line-height:15px;color:#fff;transform:scaleX(0.8967);">DISTANCE RATE</span>
<span class="t" style="left:397px;top:193px;font-size:12px;line-height:15px;color:#fff;transform:scaleX(0.9742);">N/A</span>
<span class="t" style="left:1082px;top:193px;font-size:12px;line-height:15px;color:#fff;transform:scaleX(0.8496);">ABC BASE</span>
<span class="t" style="left:1170px;top:193px;font-size:12px;line-height:15px;color:#fff;transform:scaleX(0.8496);">ABC BASE</span>
<div style="left:37px;top:193px;width:91px;height:14px;border:1px solid #000"></div>
<svg style="left:17px;top:195px" width="6" height="11" shape-rendering="crispEdges"><polygon points="0,0 6,5.5 0,11" fill="#000"/></svg>
<div style="left:0;top:208px;width:36px;height:15px;background:#f0f0f0;border-top:1px solid #fff;border-left:1px solid #fff;border-bottom:1px solid #000"></div>
<div style="left:37px;top:222px;width:1213px;height:1px;background:#808080"></div>
<span class="t" style="left:39px;top:208px;font-size:12px;line-height:15px;transform:scaleX(0.8724);">ABC024</span>
<span class="t" style="left:131px;top:208px;font-size:12px;line-height:15px;transform:scaleX(0.8824);">16:00</span>
<span class="t" style="left:185px;top:208px;font-size:12px;line-height:15px;transform:scaleX(0.8824);">24:00</span>
<span class="t" style="left:240px;top:208px;font-size:12px;line-height:15px;transform:scaleX(0.8872);">Para</span>
<span class="t" style="left:294px;top:208px;font-size:12px;line-height:15px;transform:scaleX(0.8967);">DISTANCE RATE</span>
<span class="t" style="left:397px;top:208px;font-size:12px;line-height:15px;transform:scaleX(0.9742);">N/A</span>
<span class="t" style="left:1082px;top:208px;font-size:12px;line-height:15px;transform:scaleX(0.8496);">ABC BASE</span>
<span class="t" style="left:1170px;top:208px;font-size:12px;line-height:15px;transform:scaleX(0.8496);">ABC BASE</span>
<div style="left:0;top:223px;width:36px;height:15px;background:#f0f0f0;border-top:1px solid #fff;border-left:1px solid #fff;border-bottom:1px solid #000"></div>
<div style="left:37px;top:237px;width:1213px;height:1px;background:#808080"></div>
<span class="t" style="left:39px;top:223px;font-size:12px;line-height:15px;transform:scaleX(0.8724);">ABC026</span>
<span class="t" style="left:131px;top:223px;font-size:12px;line-height:15px;transform:scaleX(0.8824);">16:00</span>
<span class="t" style="left:185px;top:223px;font-size:12px;line-height:15px;transform:scaleX(0.8824);">24:00</span>
<span class="t" style="left:240px;top:223px;font-size:12px;line-height:15px;transform:scaleX(0.8872);">Para</span>
<span class="t" style="left:294px;top:223px;font-size:12px;line-height:15px;transform:scaleX(0.8967);">DISTANCE RATE</span>
<span class="t" style="left:397px;top:223px;font-size:12px;line-height:15px;transform:scaleX(0.9742);">N/A</span>
<span class="t" style="left:1082px;top:223px;font-size:12px;line-height:15px;transform:scaleX(0.8496);">ABC BASE</span>
<span class="t" style="left:1170px;top:223px;font-size:12px;line-height:15px;transform:scaleX(0.8496);">ABC BASE</span>
<div style="left:0;top:238px;width:36px;height:15px;background:#f0f0f0;border-top:1px solid #fff;border-left:1px solid #fff;border-bottom:1px solid #000"></div>
<div style="left:37px;top:252px;width:1213px;height:1px;background:#808080"></div>
<span class="t" style="left:39px;top:238px;font-size:12px;line-height:15px;transform:scaleX(0.8724);">ABC027</span>
<span class="t" style="left:131px;top:238px;font-size:12px;line-height:15px;transform:scaleX(0.8824);">13:00</span>
<span class="t" style="left:185px;top:238px;font-size:12px;line-height:15px;transform:scaleX(0.8824);">21:00</span>
<span class="t" style="left:240px;top:238px;font-size:12px;line-height:15px;transform:scaleX(0.8872);">Para</span>
<span class="t" style="left:294px;top:238px;font-size:12px;line-height:15px;transform:scaleX(0.8967);">DISTANCE RATE</span>
<span class="t" style="left:397px;top:238px;font-size:12px;line-height:15px;transform:scaleX(0.9742);">N/A</span>
<span class="t" style="left:1082px;top:238px;font-size:12px;line-height:15px;transform:scaleX(0.8496);">ABC BASE</span>
<span class="t" style="left:1170px;top:238px;font-size:12px;line-height:15px;transform:scaleX(0.8496);">ABC BASE</span>
<div style="left:0;top:253px;width:36px;height:15px;background:#f0f0f0;border-top:1px solid #fff;border-left:1px solid #fff;border-bottom:1px solid #000"></div>
<div style="left:37px;top:267px;width:1213px;height:1px;background:#808080"></div>
<span class="t" style="left:39px;top:253px;font-size:12px;line-height:15px;transform:scaleX(0.8724);">ABC029</span>
<span class="t" style="left:131px;top:253px;font-size:12px;line-height:15px;transform:scaleX(0.8824);">13:00</span>
<span class="t" style="left:185px;top:253px;font-size:12px;line-height:15px;transform:scaleX(0.8824);">21:00</span>
<span class="t" style="left:240px;top:253px;font-size:12px;line-height:15px;transform:scaleX(0.8872);">Para</span>
<span class="t" style="left:294px;top:253px;font-size:12px;line-height:15px;transform:scaleX(0.8967);">DISTANCE RATE</span>
<span class="t" style="left:397px;top:253px;font-size:12px;line-height:15px;transform:scaleX(0.9742);">N/A</span>
<span class="t" style="left:1082px;top:253px;font-size:12px;line-height:15px;transform:scaleX(0.8496);">ABC BASE</span>
<span class="t" style="left:1170px;top:253px;font-size:12px;line-height:15px;transform:scaleX(0.8496);">ABC BASE</span>
<div style="left:0;top:268px;width:36px;height:15px;background:#f0f0f0;border-top:1px solid #fff;border-left:1px solid #fff;border-bottom:1px solid #000"></div>
<div style="left:37px;top:282px;width:1213px;height:1px;background:#808080"></div>
<span class="t" style="left:39px;top:268px;font-size:12px;line-height:15px;transform:scaleX(0.8724);">ABC029</span>
<span class="t" style="left:131px;top:268px;font-size:12px;line-height:15px;transform:scaleX(0.8824);">13:00</span>
<span class="t" style="left:185px;top:268px;font-size:12px;line-height:15px;transform:scaleX(0.8824);">21:00</span>
<span class="t" style="left:240px;top:268px;font-size:12px;line-height:15px;transform:scaleX(0.8872);">Para</span>
<span class="t" style="left:294px;top:268px;font-size:12px;line-height:15px;transform:scaleX(0.8967);">DISTANCE RATE</span>
<span class="t" style="left:397px;top:268px;font-size:12px;line-height:15px;transform:scaleX(0.9742);">N/A</span>
<span class="t" style="left:1082px;top:268px;font-size:12px;line-height:15px;transform:scaleX(0.8496);">ABC BASE</span>
<span class="t" style="left:1170px;top:268px;font-size:12px;line-height:15px;transform:scaleX(0.8496);">ABC BASE</span>
<div style="left:0;top:283px;width:36px;height:15px;background:#f0f0f0;border-top:1px solid #fff;border-left:1px solid #fff;border-bottom:1px solid #000"></div>
<div style="left:37px;top:297px;width:1213px;height:1px;background:#808080"></div>
<span class="t" style="left:39px;top:283px;font-size:12px;line-height:15px;transform:scaleX(0.8724);">ABC031</span>
<span class="t" style="left:131px;top:283px;font-size:12px;line-height:15px;transform:scaleX(0.8824);">16:00</span>
<span class="t" style="left:185px;top:283px;font-size:12px;line-height:15px;transform:scaleX(0.8824);">24:00</span>
<span class="t" style="left:240px;top:283px;font-size:12px;line-height:15px;transform:scaleX(0.8872);">Para</span>
<span class="t" style="left:294px;top:283px;font-size:12px;line-height:15px;transform:scaleX(0.8967);">DISTANCE RATE</span>
<span class="t" style="left:397px;top:283px;font-size:12px;line-height:15px;transform:scaleX(0.9742);">N/A</span>
<span class="t" style="left:1082px;top:283px;font-size:12px;line-height:15px;transform:scaleX(0.8496);">ABC BASE</span>
<span class="t" style="left:1170px;top:283px;font-size:12px;line-height:15px;transform:scaleX(0.8496);">ABC BASE</span>
<div style="left:0;top:298px;width:36px;height:15px;background:#f0f0f0;border-top:1px solid #fff;border-left:1px solid #fff;border-bottom:1px solid #000"></div>
<div style="left:37px;top:312px;width:1213px;height:1px;background:#808080"></div>
<span class="t" style="left:39px;top:298px;font-size:12px;line-height:15px;transform:scaleX(0.8724);">ABC039</span>
<span class="t" style="left:131px;top:298px;font-size:12px;line-height:15px;transform:scaleX(0.8824);">15:00</span>
<span class="t" style="left:185px;top:298px;font-size:12px;line-height:15px;transform:scaleX(0.8824);">23:00</span>
<span class="t" style="left:240px;top:298px;font-size:12px;line-height:15px;transform:scaleX(0.8872);">Para</span>
<span class="t" style="left:294px;top:298px;font-size:12px;line-height:15px;transform:scaleX(0.8967);">DISTANCE RATE</span>
<span class="t" style="left:397px;top:298px;font-size:12px;line-height:15px;transform:scaleX(0.9742);">N/A</span>
<span class="t" style="left:1082px;top:298px;font-size:12px;line-height:15px;transform:scaleX(0.8496);">ABC BASE</span>
<span class="t" style="left:1170px;top:298px;font-size:12px;line-height:15px;transform:scaleX(0.8496);">ABC BASE</span>
<div style="left:0;top:313px;width:36px;height:15px;background:#f0f0f0;border-top:1px solid #fff;border-left:1px solid #fff;border-bottom:1px solid #000"></div>
<div style="left:37px;top:327px;width:1213px;height:1px;background:#808080"></div>
<span class="t" style="left:39px;top:313px;font-size:12px;line-height:15px;transform:scaleX(0.8724);">ABC040</span>
<span class="t" style="left:131px;top:313px;font-size:12px;line-height:15px;transform:scaleX(0.8824);">13:00</span>
<span class="t" style="left:185px;top:313px;font-size:12px;line-height:15px;transform:scaleX(0.8824);">21:00</span>
<span class="t" style="left:240px;top:313px;font-size:12px;line-height:15px;transform:scaleX(0.8872);">Para</span>
<span class="t" style="left:294px;top:313px;font-size:12px;line-height:15px;transform:scaleX(0.8967);">DISTANCE RATE</span>
<span class="t" style="left:397px;top:313px;font-size:12px;line-height:15px;transform:scaleX(0.9742);">N/A</span>
<span class="t" style="left:500px;top:313px;font-size:12px;line-height:15px;transform:scaleX(0.8890);">BIRD, SPENCER</span>
<span class="t" style="left:685px;top:313px;font-size:12px;line-height:15px;transform:scaleX(0.8572);">1 - 4-AM &amp; 2-WH</span>
<span class="t" style="left:803px;top:313px;font-size:12px;line-height:15px;transform:scaleX(0.9015);">VANSMLF</span>
<span class="t" style="left:906px;top:313px;font-size:12px;line-height:15px;transform:scaleX(0.8724);">ABC003</span>
<span class="t g" style="left:1009px;top:313px;">3</span>
<span class="t" style="left:1082px;top:313px;font-size:12px;line-height:15px;transform:scaleX(0.8496);">ABC BASE</span>
<span class="t" style="left:1170px;top:313px;font-size:12px;line-height:15px;transform:scaleX(0.8496);">ABC BASE</span>
<div style="left:0;top:328px;width:36px;height:15px;background:#f0f0f0;border-top:1px solid #fff;border-left:1px solid #fff;border-bottom:1px solid #000"></div>
<div style="left:37px;top:342px;width:1213px;height:1px;background:#808080"></div>
<span class="t" style="left:39px;top:328px;font-size:12px;line-height:15px;transform:scaleX(0.8995);">MNL009</span>
<span class="t" style="left:134px;top:328px;font-size:12px;line-height:15px;transform:scaleX(0.8776);">8:00</span>
<span class="t" style="left:185px;top:328px;font-size:12px;line-height:15px;transform:scaleX(0.8824);">16:00</span>
<span class="t" style="left:240px;top:328px;font-size:12px;line-height:15px;transform:scaleX(0.8872);">Para</span>
<span class="t" style="left:294px;top:328px;font-size:12px;line-height:15px;transform:scaleX(0.8967);">DISTANCE RATE</span>
<span class="t" style="left:397px;top:328px;font-size:12px;line-height:15px;transform:scaleX(0.9742);">N/A</span>
<span class="t" style="left:500px;top:328px;font-size:12px;line-height:15px;transform:scaleX(0.8933);">AGUIRRE, HARVEY</span>
<span class="t" style="left:685px;top:328px;font-size:12px;line-height:15px;transform:scaleX(0.8572);">1 - 4-AM &amp; 2-WH</span>
<span class="t" style="left:803px;top:328px;font-size:12px;line-height:15px;transform:scaleX(0.9015);">VANSMLF</span>
<span class="t" style="left:906px;top:328px;font-size:12px;line-height:15px;transform:scaleX(0.8995);">MNL326</span>
<span class="t" style="left:1009px;top:328px;font-size:12px;line-height:15px;transform:scaleX(0.8736);">326</span>
<span class="t" style="left:1082px;top:328px;font-size:12px;line-height:15px;transform:scaleX(0.8797);">MNL BASE</span>
<span class="t" style="left:1170px;top:328px;font-size:12px;line-height:15px;transform:scaleX(0.8797);">MNL BASE</span>
<div style="left:0;top:343px;width:36px;height:15px;background:#f0f0f0;border-top:1px solid #fff;border-left:1px solid #fff;border-bottom:1px solid #000"></div>
<div style="left:37px;top:357px;width:1213px;height:1px;background:#808080"></div>
<span class="t" style="left:39px;top:343px;font-size:12px;line-height:15px;transform:scaleX(0.9175);">MNL011</span>
<span class="t" style="left:131px;top:343px;font-size:12px;line-height:15px;transform:scaleX(0.8824);">10:00</span>
<span class="t" style="left:185px;top:343px;font-size:12px;line-height:15px;transform:scaleX(0.8824);">18:00</span>
<span class="t" style="left:240px;top:343px;font-size:12px;line-height:15px;transform:scaleX(0.8872);">Para</span>
<span class="t" style="left:294px;top:343px;font-size:12px;line-height:15px;transform:scaleX(0.8967);">DISTANCE RATE</span>
<span class="t" style="left:397px;top:343px;font-size:12px;line-height:15px;transform:scaleX(0.9742);">N/A</span>
<span class="t" style="left:500px;top:343px;font-size:12px;line-height:15px;transform:scaleX(0.8985);">GARZA, RUBY</span>
<span class="t" style="left:685px;top:343px;font-size:12px;line-height:15px;transform:scaleX(0.8572);">1 - 4-AM &amp; 2-WH</span>
<span class="t" style="left:803px;top:343px;font-size:12px;line-height:15px;transform:scaleX(0.9015);">VANSMLF</span>
<span class="t" style="left:906px;top:343px;font-size:12px;line-height:15px;transform:scaleX(0.8995);">MNL184</span>
<span class="t" style="left:1009px;top:343px;font-size:12px;line-height:15px;transform:scaleX(0.8736);">184</span>
<span class="t" style="left:1082px;top:343px;font-size:12px;line-height:15px;transform:scaleX(0.8797);">MNL BASE</span>
<span class="t" style="left:1170px;top:343px;font-size:12px;line-height:15px;transform:scaleX(0.8797);">MNL BASE</span>
<div style="left:0;top:358px;width:36px;height:15px;background:#f0f0f0;border-top:1px solid #fff;border-left:1px solid #fff;border-bottom:1px solid #000"></div>
<div style="left:37px;top:372px;width:1213px;height:1px;background:#808080"></div>
<span class="t" style="left:39px;top:358px;font-size:12px;line-height:15px;transform:scaleX(0.8995);">MNL016</span>
<span class="t" style="left:134px;top:358px;font-size:12px;line-height:15px;transform:scaleX(0.8776);">8:00</span>
<span class="t" style="left:185px;top:358px;font-size:12px;line-height:15px;transform:scaleX(0.8824);">16:00</span>
<span class="t" style="left:240px;top:358px;font-size:12px;line-height:15px;transform:scaleX(0.8872);">Para</span>
<span class="t" style="left:294px;top:358px;font-size:12px;line-height:15px;transform:scaleX(0.8967);">DISTANCE RATE</span>
<span class="t" style="left:397px;top:358px;font-size:12px;line-height:15px;transform:scaleX(0.9742);">N/A</span>
<span class="t" style="left:500px;top:358px;font-size:12px;line-height:15px;transform:scaleX(0.8879);">FRENCH, DONNA</span>
<span class="t" style="left:685px;top:358px;font-size:12px;line-height:15px;transform:scaleX(0.8572);">1 - 4-AM &amp; 2-WH</span>
<span class="t" style="left:803px;top:358px;font-size:12px;line-height:15px;transform:scaleX(0.9015);">VANSMLF</span>
<span class="t" style="left:906px;top:358px;font-size:12px;line-height:15px;transform:scaleX(0.8995);">MNL282</span>
<span class="t" style="left:1009px;top:358px;font-size:12px;line-height:15px;transform:scaleX(0.8736);">282</span>
<span class="t" style="left:1082px;top:358px;font-size:12px;line-height:15px;transform:scaleX(0.8797);">MNL BASE</span>
<span class="t" style="left:1170px;top:358px;font-size:12px;line-height:15px;transform:scaleX(0.8797);">MNL BASE</span>
<div style="left:0;top:373px;width:36px;height:15px;background:#f0f0f0;border-top:1px solid #fff;border-left:1px solid #fff;border-bottom:1px solid #000"></div>
<div style="left:37px;top:387px;width:1213px;height:1px;background:#808080"></div>
<span class="t" style="left:39px;top:373px;font-size:12px;line-height:15px;transform:scaleX(0.8995);">MNL019</span>
<span class="t" style="left:134px;top:373px;font-size:12px;line-height:15px;transform:scaleX(0.8776);">6:00</span>
<span class="t" style="left:185px;top:373px;font-size:12px;line-height:15px;transform:scaleX(0.8824);">14:00</span>
<span class="t" style="left:240px;top:373px;font-size:12px;line-height:15px;transform:scaleX(0.8872);">Para</span>
<span class="t" style="left:294px;top:373px;font-size:12px;line-height:15px;transform:scaleX(0.8967);">DISTANCE RATE</span>
<span class="t" style="left:397px;top:373px;font-size:12px;line-height:15px;transform:scaleX(0.9742);">N/A</span>
<span class="t" style="left:500px;top:373px;font-size:12px;line-height:15px;transform:scaleX(0.8850);">BOWEN, PEGGY</span>
<span class="t" style="left:685px;top:373px;font-size:12px;line-height:15px;transform:scaleX(0.8572);">1 - 4-AM &amp; 2-WH</span>
<span class="t" style="left:803px;top:373px;font-size:12px;line-height:15px;transform:scaleX(0.9015);">VANSMLF</span>
<span class="t" style="left:906px;top:373px;font-size:12px;line-height:15px;transform:scaleX(0.8995);">MNL014</span>
<span class="t" style="left:1009px;top:373px;font-size:12px;line-height:15px;transform:scaleX(0.8758);">14</span>
<span class="t" style="left:1082px;top:373px;font-size:12px;line-height:15px;transform:scaleX(0.8797);">MNL BASE</span>
<span class="t" style="left:1170px;top:373px;font-size:12px;line-height:15px;transform:scaleX(0.8797);">MNL BASE</span>
<div style="left:0;top:388px;width:36px;height:15px;background:#f0f0f0;border-top:1px solid #fff;border-left:1px solid #fff;border-bottom:1px solid #000"></div>
<div style="left:37px;top:402px;width:1213px;height:1px;background:#808080"></div>
<span class="t" style="left:39px;top:388px;font-size:12px;line-height:15px;transform:scaleX(0.8995);">MNL022</span>
<span class="t" style="left:131px;top:388px;font-size:12px;line-height:15px;transform:scaleX(0.8824);">13:00</span>
<span class="t" style="left:185px;top:388px;font-size:12px;line-height:15px;transform:scaleX(0.8824);">21:00</span>
<span class="t" style="left:240px;top:388px;font-size:12px;line-height:15px;transform:scaleX(0.8872);">Para</span>
<span class="t" style="left:294px;top:388px;font-size:12px;line-height:15px;transform:scaleX(0.8967);">DISTANCE RATE</span>
<span class="t" style="left:397px;top:388px;font-size:12px;line-height:15px;transform:scaleX(0.9742);">N/A</span>
<span class="t" style="left:500px;top:388px;font-size:12px;line-height:15px;transform:scaleX(0.8935);">LLOYD, SHIRLEY</span>
<span class="t" style="left:685px;top:388px;font-size:12px;line-height:15px;transform:scaleX(0.8572);">2 - 8-AM &amp; 3-WH</span>
<span class="t" style="left:803px;top:388px;font-size:12px;line-height:15px;transform:scaleX(0.9363);">VANWDRP</span>
<span class="t" style="left:906px;top:388px;font-size:12px;line-height:15px;transform:scaleX(0.8995);">MNL271</span>
<span class="t" style="left:1009px;top:388px;font-size:12px;line-height:15px;transform:scaleX(0.8736);">271</span>
<span class="t" style="left:1082px;top:388px;font-size:12px;line-height:15px;transform:scaleX(0.8797);">MNL BASE</span>
<span class="t" style="left:1170px;top:388px;font-size:12px;line-height:15px;transform:scaleX(0.8797);">MNL BASE</span>
<div style="left:0;top:403px;width:36px;height:15px;background:#f0f0f0;border-top:1px solid #fff;border-left:1px solid #fff;border-bottom:1px solid #000"></div>
<div style="left:37px;top:417px;width:1213px;height:1px;background:#808080"></div>
<span class="t" style="left:39px;top:403px;font-size:12px;line-height:15px;transform:scaleX(0.8995);">MNL025</span>
<span class="t" style="left:131px;top:403px;font-size:12px;line-height:15px;transform:scaleX(0.8824);">16:00</span>
<span class="t" style="left:185px;top:403px;font-size:12px;line-height:15px;transform:scaleX(0.8824);">24:00</span>
<span class="t" style="left:240px;top:403px;font-size:12px;line-height:15px;transform:scaleX(0.8872);">Para</span>
<span class="t" style="left:294px;top:403px;font-size:12px;line-height:15px;transform:scaleX(0.8967);">DISTANCE RATE</span>
<span class="t" style="left:397px;top:403px;font-size:12px;line-height:15px;transform:scaleX(0.9742);">N/A</span>
<span class="t" style="left:500px;top:403px;font-size:12px;line-height:15px;transform:scaleX(0.9160);">WALTON, GRADY</span>
<span class="t" style="left:685px;top:403px;font-size:12px;line-height:15px;transform:scaleX(0.8367);">3 - 3-AM</span>
<span class="t" style="left:803px;top:403px;font-size:12px;line-height:15px;transform:scaleX(0.8732);">SEDAN</span>
<span class="t" style="left:906px;top:403px;font-size:12px;line-height:15px;transform:scaleX(0.8995);">MNL327</span>
<span class="t" style="left:1009px;top:403px;font-size:12px;line-height:15px;transform:scaleX(0.8736);">327</span>
<span class="t" style="left:1082px;top:403px;font-size:12px;line-height:15px;transform:scaleX(0.8797);">MNL BASE</span>
<span class="t" style="left:1170px;top:403px;font-size:12px;line-height:15px;transform:scaleX(0.8797);">MNL BASE</span>
<div style="left:0;top:418px;width:36px;height:15px;background:#f0f0f0;border-top:1px solid #fff;border-left:1px solid #fff;border-bottom:1px solid #000"></div>
<div style="left:37px;top:432px;width:1213px;height:1px;background:#808080"></div>
<span class="t" style="left:39px;top:418px;font-size:12px;line-height:15px;transform:scaleX(0.8995);">MNL032</span>
<span class="t" style="left:131px;top:418px;font-size:12px;line-height:15px;transform:scaleX(0.8824);">15:00</span>
<span class="t" style="left:185px;top:418px;font-size:12px;line-height:15px;transform:scaleX(0.8824);">23:00</span>
<span class="t" style="left:240px;top:418px;font-size:12px;line-height:15px;transform:scaleX(0.8872);">Para</span>
<span class="t" style="left:294px;top:418px;font-size:12px;line-height:15px;transform:scaleX(0.8967);">DISTANCE RATE</span>
<span class="t" style="left:397px;top:418px;font-size:12px;line-height:15px;transform:scaleX(0.9742);">N/A</span>
<span class="t" style="left:500px;top:418px;font-size:12px;line-height:15px;transform:scaleX(0.8953);">NUNEZ, DOMINGO</span>
<span class="t" style="left:685px;top:418px;font-size:12px;line-height:15px;transform:scaleX(0.8367);">3 - 3-AM</span>
<span class="t" style="left:803px;top:418px;font-size:12px;line-height:15px;transform:scaleX(0.8732);">SEDAN</span>
<span class="t" style="left:906px;top:418px;font-size:12px;line-height:15px;transform:scaleX(0.8995);">MNL092</span>
<span class="t" style="left:1009px;top:418px;font-size:12px;line-height:15px;transform:scaleX(0.8758);">92</span>
<span class="t" style="left:1082px;top:418px;font-size:12px;line-height:15px;transform:scaleX(0.8797);">MNL BASE</span>
<span class="t" style="left:1170px;top:418px;font-size:12px;line-height:15px;transform:scaleX(0.8797);">MNL BASE</span>
<div style="left:0;top:433px;width:36px;height:15px;background:#f0f0f0;border-top:1px solid #fff;border-left:1px solid #fff;border-bottom:1px solid #000"></div>
<div style="left:37px;top:447px;width:1213px;height:1px;background:#808080"></div>
<span class="t" style="left:39px;top:433px;font-size:12px;line-height:15px;transform:scaleX(0.8995);">MNL033</span>
<span class="t" style="left:131px;top:433px;font-size:12px;line-height:15px;transform:scaleX(0.8824);">15:00</span>
<span class="t" style="left:185px;top:433px;font-size:12px;line-height:15px;transform:scaleX(0.8824);">23:00</span>
<span class="t" style="left:240px;top:433px;font-size:12px;line-height:15px;transform:scaleX(0.8872);">Para</span>
<span class="t" style="left:294px;top:433px;font-size:12px;line-height:15px;transform:scaleX(0.8967);">DISTANCE RATE</span>
<span class="t" style="left:397px;top:433px;font-size:12px;line-height:15px;transform:scaleX(0.9742);">N/A</span>
<span class="t" style="left:500px;top:433px;font-size:12px;line-height:15px;transform:scaleX(0.9024);">MCKENZIE, SHAWNA</span>
<span class="t" style="left:685px;top:433px;font-size:12px;line-height:15px;transform:scaleX(0.8572);">2 - 8-AM &amp; 3-WH</span>
<span class="t" style="left:803px;top:433px;font-size:12px;line-height:15px;transform:scaleX(0.9363);">VANWDRP</span>
<span class="t" style="left:906px;top:433px;font-size:12px;line-height:15px;transform:scaleX(0.8995);">MNL120</span>
<span class="t" style="left:1009px;top:433px;font-size:12px;line-height:15px;transform:scaleX(0.8736);">120</span>
<span class="t" style="left:1082px;top:433px;font-size:12px;line-height:15px;transform:scaleX(0.8797);">MNL BASE</span>
<span class="t" style="left:1170px;top:433px;font-size:12px;line-height:15px;transform:scaleX(0.8797);">MNL BASE</span>
<div style="left:0;top:448px;width:36px;height:15px;background:#f0f0f0;border-top:1px solid #fff;border-left:1px solid #fff;border-bottom:1px solid #000"></div>
<div style="left:37px;top:462px;width:1213px;height:1px;background:#808080"></div>
<span class="t" style="left:39px;top:448px;font-size:12px;line-height:15px;transform:scaleX(0.8995);">MNL034</span>
<span class="t" style="left:131px;top:448px;font-size:12px;line-height:15px;transform:scaleX(0.8824);">16:00</span>
<span class="t" style="left:185px;top:448px;font-size:12px;line-height:15px;transform:scaleX(0.8824);">24:00</span>
<span class="t" style="left:240px;top:448px;font-size:12px;line-height:15px;transform:scaleX(0.8872);">Para</span>
<span class="t" style="left:294px;top:448px;font-size:12px;line-height:15px;transform:scaleX(0.8967);">DISTANCE RATE</span>
<span class="t" style="left:397px;top:448px;font-size:12px;line-height:15px;transform:scaleX(0.9742);">N/A</span>
<span class="t" style="left:500px;top:448px;font-size:12px;line-height:15px;transform:scaleX(0.8840);">LAWRENCE, VICKIE</span>
<span class="t" style="left:685px;top:448px;font-size:12px;line-height:15px;transform:scaleX(0.8572);">2 - 8-AM &amp; 3-WH</span>
<span class="t" style="left:803px;top:448px;font-size:12px;line-height:15px;transform:scaleX(0.9363);">VANWDRP</span>
<span class="t" style="left:906px;top:448px;font-size:12px;line-height:15px;transform:scaleX(0.8995);">MNL335</span>
<span class="t" style="left:1009px;top:448px;font-size:12px;line-height:15px;transform:scaleX(0.8736);">335</span>
<span class="t" style="left:1082px;top:448px;font-size:12px;line-height:15px;transform:scaleX(0.8797);">MNL BASE</span>
<span class="t" style="left:1170px;top:448px;font-size:12px;line-height:15px;transform:scaleX(0.8797);">MNL BASE</span>
<div style="left:0;top:463px;width:36px;height:15px;background:#f0f0f0;border-top:1px solid #fff;border-left:1px solid #fff;border-bottom:1px solid #000"></div>
<div style="left:37px;top:477px;width:1213px;height:1px;background:#808080"></div>
<span class="t" style="left:39px;top:463px;font-size:12px;line-height:15px;transform:scaleX(0.8995);">MNL036</span>
<span class="t" style="left:131px;top:463px;font-size:12px;line-height:15px;transform:scaleX(0.8824);">13:00</span>
<span class="t" style="left:185px;top:463px;font-size:12px;line-height:15px;transform:scaleX(0.8824);">21:00</span>
<span class="t" style="left:240px;top:463px;font-size:12px;line-height:15px;transform:scaleX(0.8872);">Para</span>
<span class="t" style="left:294px;top:463px;font-size:12px;line-height:15px;transform:scaleX(0.8967);">DISTANCE RATE</span>
<span class="t" style="left:397px;top:463px;font-size:12px;line-height:15px;transform:scaleX(0.9742);">N/A</span>
<span class="t" style="left:500px;top:463px;font-size:12px;line-height:15px;transform:scaleX(0.8895);">JIMENEZ, MARLENE</span>
<span class="t" style="left:685px;top:463px;font-size:12px;line-height:15px;transform:scaleX(0.8367);">3 - 3-AM</span>
<span class="t" style="left:803px;top:463px;font-size:12px;line-height:15px;transform:scaleX(0.8732);">SEDAN</span>
<span class="t" style="left:906px;top:463px;font-size:12px;line-height:15px;transform:scaleX(0.8995);">MNL251</span>
<span class="t" style="left:1009px;top:463px;font-size:12px;line-height:15px;transform:scaleX(0.8736);">251</span>
<span class="t" style="left:1082px;top:463px;font-size:12px;line-height:15px;transform:scaleX(0.8797);">MNL BASE</span>
<span class="t" style="left:1170px;top:463px;font-size:12px;line-height:15px;transform:scaleX(0.8797);">MNL BASE</span>
<div style="left:0;top:478px;width:36px;height:15px;background:#f0f0f0;border-top:1px solid #fff;border-left:1px solid #fff;border-bottom:1px solid #000"></div>
<div style="left:37px;top:492px;width:1213px;height:1px;background:#808080"></div>
<span class="t" style="left:39px;top:478px;font-size:12px;line-height:15px;transform:scaleX(0.8995);">MNL037</span>
<span class="t" style="left:131px;top:478px;font-size:12px;line-height:15px;transform:scaleX(0.8824);">13:00</span>
<span class="t" style="left:185px;top:478px;font-size:12px;line-height:15px;transform:scaleX(0.8824);">21:00</span>
<span class="t" style="left:240px;top:478px;font-size:12px;line-height:15px;transform:scaleX(0.8872);">Para</span>
<span class="t" style="left:294px;top:478px;font-size:12px;line-height:15px;transform:scaleX(0.8967);">DISTANCE RATE</span>
<span class="t" style="left:397px;top:478px;font-size:12px;line-height:15px;transform:scaleX(0.9742);">N/A</span>
<span class="t" style="left:500px;top:478px;font-size:12px;line-height:15px;transform:scaleX(0.8941);">CANNON, ARMANDO</span>
<span class="t" style="left:685px;top:478px;font-size:12px;line-height:15px;transform:scaleX(0.8572);">2 - 8-AM &amp; 3-WH</span>
<span class="t" style="left:803px;top:478px;font-size:12px;line-height:15px;transform:scaleX(0.9363);">VANWDRP</span>
<span class="t" style="left:906px;top:478px;font-size:12px;line-height:15px;transform:scaleX(0.8995);">MNL049</span>
<span class="t" style="left:1009px;top:478px;font-size:12px;line-height:15px;transform:scaleX(0.8758);">49</span>
<span class="t" style="left:1082px;top:478px;font-size:12px;line-height:15px;transform:scaleX(0.8797);">MNL BASE</span>
<span class="t" style="left:1170px;top:478px;font-size:12px;line-height:15px;transform:scaleX(0.8797);">MNL BASE</span>
<div style="left:0;top:493px;width:36px;height:15px;background:#f0f0f0;border-top:1px solid #fff;border-left:1px solid #fff;border-bottom:1px solid #000"></div>
<div style="left:37px;top:507px;width:1213px;height:1px;background:#808080"></div>
<span class="t" style="left:39px;top:493px;font-size:12px;line-height:15px;transform:scaleX(0.8995);">MNL038</span>
<span class="t" style="left:131px;top:493px;font-size:12px;line-height:15px;transform:scaleX(0.8824);">13:00</span>
<span class="t" style="left:185px;top:493px;font-size:12px;line-height:15px;transform:scaleX(0.8824);">21:00</span>
<span class="t" style="left:240px;top:493px;font-size:12px;line-height:15px;transform:scaleX(0.8872);">Para</span>
<span class="t" style="left:294px;top:493px;font-size:12px;line-height:15px;transform:scaleX(0.8967);">DISTANCE RATE</span>
<span class="t" style="left:397px;top:493px;font-size:12px;line-height:15px;transform:scaleX(0.9742);">N/A</span>
<span class="t" style="left:500px;top:493px;font-size:12px;line-height:15px;transform:scaleX(0.8998);">DELGADO, RUTH</span>
<span class="t" style="left:685px;top:493px;font-size:12px;line-height:15px;transform:scaleX(0.8572);">2 - 8-AM &amp; 3-WH</span>
<span class="t" style="left:803px;top:493px;font-size:12px;line-height:15px;transform:scaleX(0.9363);">VANWDRP</span>
<span class="t" style="left:906px;top:493px;font-size:12px;line-height:15px;transform:scaleX(0.8995);">MNL191</span>
<span class="t" style="left:1009px;top:493px;font-size:12px;line-height:15px;transform:scaleX(0.8736);">191</span>
<span class="t" style="left:1082px;top:493px;font-size:12px;line-height:15px;transform:scaleX(0.8797);">MNL BASE</span>
<span class="t" style="left:1170px;top:493px;font-size:12px;line-height:15px;transform:scaleX(0.8797);">MNL BASE</span>
<div style="left:36px;top:28px;width:1px;height:480px;background:#000"></div>
<div style="left:128px;top:28px;width:1px;height:480px;background:#808080"></div>
<div style="left:182px;top:28px;width:1px;height:480px;background:#808080"></div>
<div style="left:237px;top:28px;width:1px;height:480px;background:#808080"></div>
<div style="left:291px;top:28px;width:1px;height:480px;background:#808080"></div>
<div style="left:394px;top:28px;width:1px;height:480px;background:#808080"></div>
<div style="left:497px;top:28px;width:1px;height:480px;background:#808080"></div>
<div style="left:682px;top:28px;width:1px;height:480px;background:#808080"></div>
<div style="left:800px;top:28px;width:1px;height:480px;background:#808080"></div>
<div style="left:903px;top:28px;width:1px;height:480px;background:#808080"></div>
<div style="left:1006px;top:28px;width:1px;height:480px;background:#808080"></div>
<div style="left:1079px;top:28px;width:1px;height:480px;background:#808080"></div>
<div style="left:1167px;top:28px;width:1px;height:480px;background:#808080"></div>
<div style="left:1249px;top:28px;width:1px;height:480px;background:#808080"></div>
</div>
<div style="left:1256px;top:279px;width:21px;height:1px;background:#000"></div>
<div style="left:1257px;top:280px;width:1px;height:499px;background:#fff"></div>
<div style="left:1261px;top:280px;width:16px;height:499px;background:repeating-conic-gradient(#fff 0% 25%,#f0f0f0 0% 50%) 0 0/2px 2px"></div>
<div class="ro" style="left:1261px;top:280px;width:16px;height:17px"><div class="ri"></div></div>
<svg style="left:1266px;top:286px" width="7" height="4" shape-rendering="crispEdges"><polygon points="3.5,0 7,4 0,4" fill="#000"/></svg>
<div class="ro" style="left:1261px;top:297px;width:16px;height:17px"><div class="ri"></div></div>
<div class="ro" style="left:1261px;top:763px;width:16px;height:16px"><div class="ri"></div></div>
<svg style="left:1266px;top:769px" width="7" height="4" shape-rendering="crispEdges"><polygon points="0,0 7,0 3.5,4" fill="#000"/></svg>
<div style="left:7px;top:780px;width:1254px;height:16px;background:repeating-conic-gradient(#fff 0% 25%,#f0f0f0 0% 50%) 0 0/2px 2px"></div>
<div class="ro" style="left:7px;top:780px;width:17px;height:16px"><div class="ri"></div></div>
<svg style="left:13px;top:784px" width="4" height="7" shape-rendering="crispEdges"><polygon points="4,0 4,7 0,3.5" fill="#000"/></svg>
<div class="ro" style="left:117px;top:780px;width:17px;height:16px"><div class="ri"></div></div>
<div class="ro" style="left:1244px;top:780px;width:17px;height:16px"><div class="ri"></div></div>
<svg style="left:1251px;top:784px" width="4" height="7" shape-rendering="crispEdges"><polygon points="0,0 4,3.5 0,7" fill="#000"/></svg>
<div style="left:1261px;top:779px;width:16px;height:17px;background:#c8c8c8"></div>
<div style="left:471px;top:248px;width:569px;height:352px;background:#f0f0f0;border:1px solid #1883d7;box-shadow:0 3px 18px 1px rgba(0,0,0,0.34)"></div>
<div style="left:472px;top:249px;width:567px;height:25px;background:#fff"></div>
<span class="t" style="left:475.3px;top:254px;font-size:12px;line-height:15px;letter-spacing:-0.04px;">Run Activation Wizard</span>
<svg style="left:1018px;top:255px" width="12" height="12"><path d="M1 1L11 11M11 1L1 11" stroke="#000" stroke-width="1.1" fill="none"/></svg>
<div class="so" style="left:484px;top:285px;width:188px;height:132px"><div class="si" style=""></div></div>
<div style="left:486px;top:287px;width:184px;height:17px;background:#f0f0f0;border-bottom:1px solid #696969"></div>
<div style="left:486px;top:287px;width:148px;height:16px;border:1px solid;border-color:#fff #696969 #a0a0a0 #fff"></div>
<div style="left:634px;top:287px;width:36px;height:16px;border:1px solid;border-color:#fff #696969 #a0a0a0 #fff"></div>
<span class="t" style="left:491.5px;top:289px;font-size:12px;line-height:15px;transform:scaleX(0.8804);">Run Name</span>
<span class="t" style="left:489px;top:304px;font-size:12px;line-height:15px;transform:scaleX(0.8724);">ABC023</span>
<span class="t" style="left:489px;top:318px;font-size:12px;line-height:15px;transform:scaleX(0.8724);">ABC020</span>
<span class="t" style="left:489px;top:332px;font-size:12px;line-height:15px;transform:scaleX(0.8724);">ABC017</span>
<span class="t" style="left:489px;top:346px;font-size:12px;line-height:15px;transform:scaleX(0.8724);">ABC020</span>
<div class="so" style="left:688px;top:289px;width:13px;height:13px"><div class="si" style=""></div></div>
<span class="t" style="left:706.4px;top:289px;font-size:12px;line-height:15px;transform:scaleX(0.8792);">Delete runs from Live Schedule(s)</span>
<div class="so" style="left:688px;top:308px;width:13px;height:13px"><div class="si" style=""></div></div>
<span class="t" style="left:706px;top:308px;font-size:12px;line-height:15px;transform:scaleX(0.8903);">Activate runs into Live Schedule(s)</span>
<span class="t" style="left:688.5px;top:329px;font-size:12px;line-height:15px;transform:scaleX(0.7976);">From:</span>
<div class="so" style="left:723px;top:326px;width:98px;height:20px"><div class="si" style=""></div></div>
<span class="t" style="left:726.8px;top:329px;font-size:12px;line-height:15px;transform:scaleX(0.8633);">04-13-2017</span>
<span class="t" style="left:865px;top:329px;font-size:12px;line-height:15px;transform:scaleX(0.9054);">To:</span>
<div class="so" style="left:910px;top:326px;width:98px;height:20px"><div class="si" style=""></div></div>
<span class="t" style="left:912.6px;top:329px;font-size:12px;line-height:15px;transform:scaleX(0.8878);">04-19-2017</span>
<div class="so" style="left:688px;top:360px;width:13px;height:13px"><div class="si" style=""></div></div>
<span class="t" style="left:706.4px;top:360px;font-size:12px;line-height:15px;transform:scaleX(0.8827);">Delete runs from Template Schedule(s)</span>
<div class="so" style="left:688px;top:379px;width:13px;height:13px"><div class="si" style=""></div></div>
<span class="t" style="left:706px;top:379px;font-size:12px;line-height:15px;transform:scaleX(0.8918);">Activate run into Template Schedule(s):</span>
<div class="so" style="left:904px;top:378px;width:124px;height:23px"><div class="si" style=""></div></div>
<div class="ro" style="left:1010px;top:380px;width:16px;height:19px"><div class="ri"></div></div>
<svg style="left:1015px;top:388px" width="7" height="4" shape-rendering="crispEdges"><polygon points="0,0 7,0 3.5,4" fill="#000"/></svg>
<span class="t" style="left:911px;top:383px;font-size:12px;line-height:15px;transform:scaleX(0.8804);">TEMPLATE</span>
<span class="t" style="left:688px;top:401px;font-size:12px;line-height:15px;transform:scaleX(0.8962);">Weekdays:</span>
<div class="so" style="left:751px;top:398px;width:140px;height:23px"><div class="si" style=""></div></div>
<div class="ro" style="left:873px;top:400px;width:16px;height:19px"><div class="ri"></div></div>
<svg style="left:878px;top:408px" width="7" height="4" shape-rendering="crispEdges"><polygon points="0,0 7,0 3.5,4" fill="#000"/></svg>
<span class="t" style="left:757px;top:403px;font-size:12px;line-height:15px;transform:scaleX(0.9359);">U,M,T,W,H,F,S</span>
<div style="left:477px;top:426px;width:302px;height:161px;border:1px solid #a0a0a0"></div>
<div style="left:478px;top:427px;width:300px;height:1px;background:#fff"></div>
<div style="left:478px;top:427px;width:1px;height:159px;background:#fff"></div>
<div style="left:477px;top:587px;width:303px;height:1px;background:#fff"></div>
<div style="left:779px;top:426px;width:1px;height:162px;background:#fff"></div>
<div style="left:487.8px;top:426px;width:49px;height:2px;background:#f0f0f0"></div>
<span class="t" style="left:489.8px;top:419px;font-size:12px;line-height:15px;transform:scaleX(0.8849);">Log View</span>
<div class="so" style="left:486px;top:432px;width:285px;height:145px"><div class="si" style=""></div></div>
<div class="so" style="left:787px;top:426px;width:13px;height:13px"><div class="si" style=""></div></div>
<span class="t" style="left:805.5px;top:426px;font-size:12px;line-height:15px;transform:scaleX(0.8697);">Change Existing</span>
<div class="so" style="left:787px;top:451px;width:13px;height:13px"><div class="si" style=""></div></div>
<span class="t" style="left:804.5px;top:445px;font-size:12px;line-height:15px;transform:scaleX(0.8833);">Unschedule trips with violations that</span>
<span class="t" style="left:804.5px;top:458px;font-size:12px;line-height:15px;transform:scaleX(0.8890);">exceed the violation set</span>
<div class="so" style="left:807px;top:476px;width:182px;height:21px"><div class="si" style=""></div></div>
<div class="ro" style="left:971px;top:478px;width:16px;height:17px"><div class="ri"></div></div>
<svg style="left:976px;top:485px" width="7" height="4" shape-rendering="crispEdges"><polygon points="0,0 7,0 3.5,4" fill="#000"/></svg>
<span class="t" style="left:811px;top:480px;font-size:12px;line-height:15px;transform:scaleX(0.9071);">Default</span>
<div class="ro" style="left:789px;top:565px;width:75px;height:23px"><div class="ri"></div></div>
<span class="t" style="left:815.3px;top:569px;font-size:12px;line-height:15px;transform:scaleX(0.8878);">Start</span>
<div style="left:871px;top:565px;width:75px;height:23px;border:1px solid #444"></div>
<div class="ro" style="left:872px;top:566px;width:73px;height:21px"><div class="ri"></div></div>
<span class="t" style="left:895.5px;top:569px;font-size:12px;line-height:15px;transform:scaleX(0.8310);">Close</span>
<div class="ro" style="left:954px;top:565px;width:75px;height:23px"><div class="ri"></div></div>
<span class="t" style="left:957.3px;top:569px;font-size:12px;line-height:15px;transform:scaleX(0.8737);">Clear LogView</span>
<div style="left:1px;top:810px;width:1284px;height:1px;background:#fff"></div>
<span class="t" style="left:8.5px;top:814px;letter-spacing:-0.07px;-webkit-text-stroke:0.3px;">Press F1 for help</span>
<div style="left:495px;top:814px;width:444px;height:15px;border:1px solid;border-color:#a0a0a0 #fff #fff #a0a0a0"></div>
<span class="t" style="left:499.5px;top:814px;letter-spacing:0.02px;-webkit-text-stroke:0.3px;">READY</span>
<div style="left:942px;top:814px;width:92px;height:15px;border:1px solid;border-color:#a0a0a0 #fff #fff #a0a0a0"></div>
<div style="left:1037px;top:814px;width:94px;height:15px;border:1px solid;border-color:#a0a0a0 #fff #fff #a0a0a0"></div>
<span class="t" style="left:1041.3px;top:814px;letter-spacing:0.03px;-webkit-text-stroke:0.3px;">Row: 12/45</span>
<div style="left:1135px;top:814px;width:77px;height:15px;border:1px solid;border-color:#a0a0a0 #fff #fff #a0a0a0"></div>
<span class="t" style="left:1139.4px;top:814px;letter-spacing:-0.03px;-webkit-text-stroke:0.3px;">04-13-2018</span>
<div style="left:1215px;top:814px;width:51px;height:15px;border:1px solid;border-color:#a0a0a0 #fff #fff #a0a0a0"></div>
<span class="t" style="left:1219.7px;top:814px;letter-spacing:-0.11px;-webkit-text-stroke:0.3px;">12:53</span>
<svg style="left:1272px;top:816px" width="13" height="13"><path d="M12.5 4L4.5 12M12.5 7.5L8 12M12.5 10.5L11 12" stroke="#a4a4a4" stroke-width="1.2" fill="none"/></svg>
</div>
</body></html>
